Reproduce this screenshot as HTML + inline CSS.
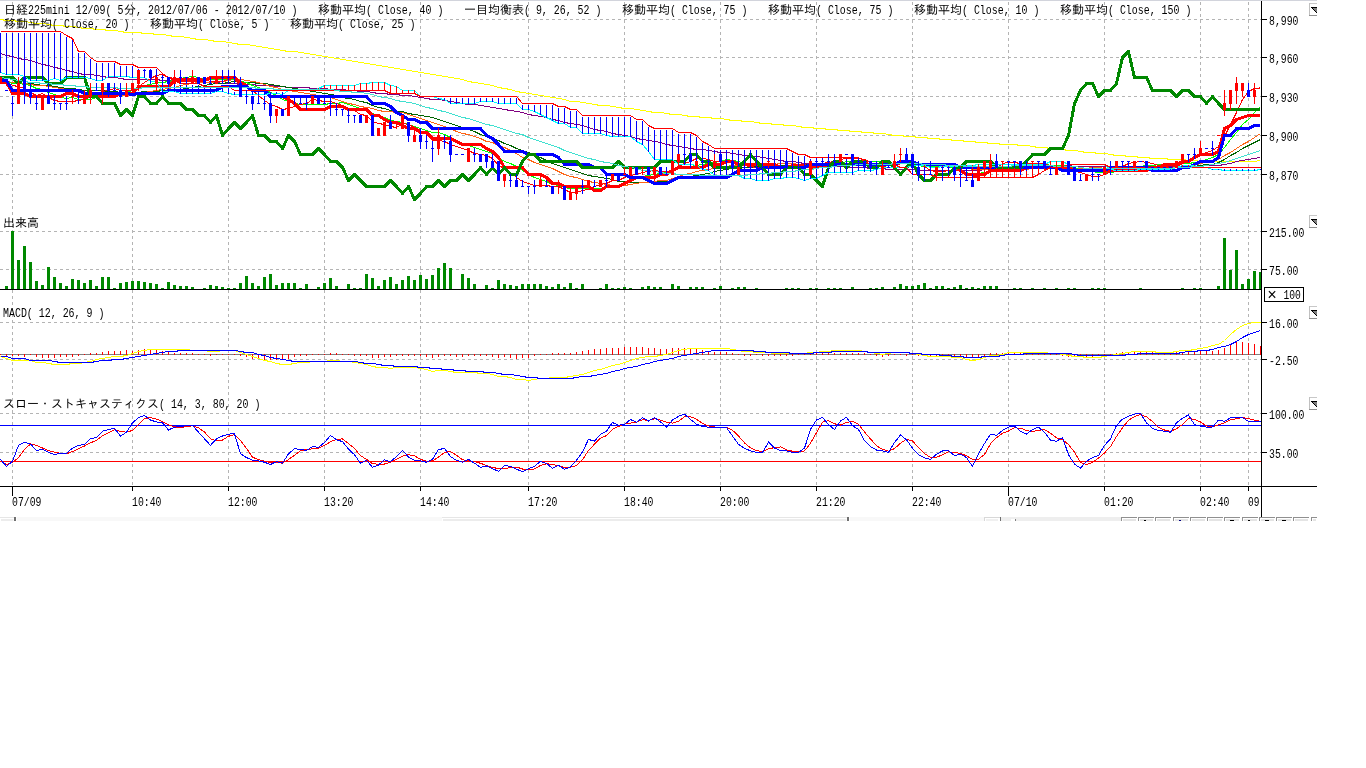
<!DOCTYPE html><html><head><meta charset="utf-8"><title>chart</title><style>
html,body{margin:0;padding:0;background:#fff;overflow:hidden}svg{display:block;will-change:transform}
text{font-family:"Liberation Mono", "IPAGothic", monospace;font-size:12px;fill:#000;white-space:pre}
</style></head><body>
<svg width="1366" height="768" viewBox="0 0 1366 768" shape-rendering="crispEdges">
<rect x="0" y="0" width="1366" height="768" fill="#fff" />
<rect x="0" y="0" width="1317" height="1" fill="#d2d4dc" />
<g stroke="#b4b4b4" stroke-width="1" stroke-dasharray="3 3">
<line x1="12.5" y1="2" x2="12.5" y2="486"/>
<line x1="132.5" y1="2" x2="132.5" y2="486"/>
<line x1="228.5" y1="2" x2="228.5" y2="486"/>
<line x1="324.5" y1="2" x2="324.5" y2="486"/>
<line x1="420.5" y1="2" x2="420.5" y2="486"/>
<line x1="528.5" y1="2" x2="528.5" y2="486"/>
<line x1="624.5" y1="2" x2="624.5" y2="486"/>
<line x1="720.5" y1="2" x2="720.5" y2="486"/>
<line x1="816.5" y1="2" x2="816.5" y2="486"/>
<line x1="912.5" y1="2" x2="912.5" y2="486"/>
<line x1="1008.5" y1="2" x2="1008.5" y2="486"/>
<line x1="1104.5" y1="2" x2="1104.5" y2="486"/>
<line x1="1200.5" y1="2" x2="1200.5" y2="486"/>
<line x1="1248.5" y1="2" x2="1248.5" y2="486"/>
<line x1="0" y1="19.5" x2="1261" y2="19.5"/>
<line x1="0" y1="57.5" x2="1261" y2="57.5"/>
<line x1="0" y1="96.5" x2="1261" y2="96.5"/>
<line x1="0" y1="135.5" x2="1261" y2="135.5"/>
<line x1="0" y1="174.5" x2="1261" y2="174.5"/>
<line x1="0" y1="231.5" x2="1261" y2="231.5"/>
<line x1="0" y1="269.5" x2="1261" y2="269.5"/>
<line x1="0" y1="322.5" x2="1261" y2="322.5"/>
<line x1="0" y1="359.5" x2="1261" y2="359.5"/>
<line x1="0" y1="413.5" x2="1261" y2="413.5"/>
<line x1="0" y1="452.5" x2="1261" y2="452.5"/>
</g>
<g fill="#008800">
<rect x="5" y="286" width="3" height="3"/>
<rect x="11" y="231" width="3" height="58"/>
<rect x="17" y="260" width="3" height="29"/>
<rect x="23" y="246" width="3" height="43"/>
<rect x="29" y="262" width="3" height="27"/>
<rect x="35" y="281" width="3" height="8"/>
<rect x="41" y="285" width="3" height="4"/>
<rect x="47" y="267" width="3" height="22"/>
<rect x="53" y="277" width="3" height="12"/>
<rect x="59" y="283" width="3" height="6"/>
<rect x="65" y="286" width="3" height="3"/>
<rect x="71" y="279" width="3" height="10"/>
<rect x="77" y="280" width="3" height="9"/>
<rect x="83" y="283" width="3" height="6"/>
<rect x="89" y="280" width="3" height="9"/>
<rect x="95" y="286" width="3" height="3"/>
<rect x="101" y="277" width="3" height="12"/>
<rect x="107" y="277" width="3" height="12"/>
<rect x="113" y="288" width="3" height="1"/>
<rect x="119" y="283" width="3" height="6"/>
<rect x="125" y="282" width="3" height="7"/>
<rect x="131" y="281" width="3" height="8"/>
<rect x="137" y="281" width="3" height="8"/>
<rect x="143" y="282" width="3" height="7"/>
<rect x="149" y="283" width="3" height="6"/>
<rect x="155" y="284" width="3" height="5"/>
<rect x="161" y="288" width="3" height="1"/>
<rect x="167" y="282" width="3" height="7"/>
<rect x="173" y="285" width="3" height="4"/>
<rect x="179" y="286" width="3" height="3"/>
<rect x="185" y="286" width="3" height="3"/>
<rect x="191" y="287" width="3" height="2"/>
<rect x="203" y="288" width="3" height="1"/>
<rect x="209" y="285" width="3" height="4"/>
<rect x="215" y="286" width="3" height="3"/>
<rect x="221" y="287" width="3" height="2"/>
<rect x="227" y="288" width="3" height="1"/>
<rect x="233" y="288" width="3" height="1"/>
<rect x="239" y="283" width="3" height="6"/>
<rect x="245" y="276" width="3" height="13"/>
<rect x="251" y="283" width="3" height="6"/>
<rect x="257" y="286" width="3" height="3"/>
<rect x="263" y="277" width="3" height="12"/>
<rect x="269" y="274" width="3" height="15"/>
<rect x="275" y="285" width="3" height="4"/>
<rect x="281" y="283" width="3" height="6"/>
<rect x="287" y="283" width="3" height="6"/>
<rect x="293" y="283" width="3" height="6"/>
<rect x="299" y="288" width="3" height="1"/>
<rect x="305" y="284" width="3" height="5"/>
<rect x="317" y="287" width="3" height="2"/>
<rect x="323" y="283" width="3" height="6"/>
<rect x="329" y="278" width="3" height="11"/>
<rect x="335" y="286" width="3" height="3"/>
<rect x="347" y="284" width="3" height="5"/>
<rect x="353" y="288" width="3" height="1"/>
<rect x="359" y="288" width="3" height="1"/>
<rect x="365" y="274" width="3" height="15"/>
<rect x="371" y="278" width="3" height="11"/>
<rect x="377" y="286" width="3" height="3"/>
<rect x="383" y="280" width="3" height="9"/>
<rect x="389" y="277" width="3" height="12"/>
<rect x="395" y="284" width="3" height="5"/>
<rect x="401" y="280" width="3" height="9"/>
<rect x="407" y="276" width="3" height="13"/>
<rect x="413" y="280" width="3" height="9"/>
<rect x="419" y="275" width="3" height="14"/>
<rect x="425" y="279" width="3" height="10"/>
<rect x="431" y="275" width="3" height="14"/>
<rect x="437" y="268" width="3" height="21"/>
<rect x="443" y="263" width="3" height="26"/>
<rect x="449" y="268" width="3" height="21"/>
<rect x="461" y="274" width="3" height="15"/>
<rect x="467" y="278" width="3" height="11"/>
<rect x="473" y="284" width="3" height="5"/>
<rect x="485" y="285" width="3" height="4"/>
<rect x="491" y="288" width="3" height="1"/>
<rect x="497" y="280" width="3" height="9"/>
<rect x="503" y="284" width="3" height="5"/>
<rect x="509" y="285" width="3" height="4"/>
<rect x="515" y="286" width="3" height="3"/>
<rect x="521" y="284" width="3" height="5"/>
<rect x="527" y="284" width="3" height="5"/>
<rect x="533" y="284" width="3" height="5"/>
<rect x="539" y="284" width="3" height="5"/>
<rect x="545" y="286" width="3" height="3"/>
<rect x="551" y="287" width="3" height="2"/>
<rect x="557" y="284" width="3" height="5"/>
<rect x="563" y="287" width="3" height="2"/>
<rect x="569" y="283" width="3" height="6"/>
<rect x="575" y="288" width="3" height="1"/>
<rect x="581" y="284" width="3" height="5"/>
<rect x="599" y="288" width="3" height="1"/>
<rect x="605" y="284" width="3" height="5"/>
<rect x="611" y="288" width="3" height="1"/>
<rect x="617" y="288" width="3" height="1"/>
<rect x="623" y="287" width="3" height="2"/>
<rect x="629" y="288" width="3" height="1"/>
<rect x="641" y="287" width="3" height="2"/>
<rect x="647" y="286" width="3" height="3"/>
<rect x="653" y="287" width="3" height="2"/>
<rect x="659" y="287" width="3" height="2"/>
<rect x="671" y="284" width="3" height="5"/>
<rect x="677" y="286" width="3" height="3"/>
<rect x="689" y="287" width="3" height="2"/>
<rect x="695" y="287" width="3" height="2"/>
<rect x="701" y="287" width="3" height="2"/>
<rect x="713" y="288" width="3" height="1"/>
<rect x="719" y="286" width="3" height="3"/>
<rect x="731" y="288" width="3" height="1"/>
<rect x="737" y="287" width="3" height="2"/>
<rect x="743" y="287" width="3" height="2"/>
<rect x="755" y="288" width="3" height="1"/>
<rect x="785" y="288" width="3" height="1"/>
<rect x="791" y="288" width="3" height="1"/>
<rect x="797" y="288" width="3" height="1"/>
<rect x="809" y="288" width="3" height="1"/>
<rect x="815" y="288" width="3" height="1"/>
<rect x="827" y="288" width="3" height="1"/>
<rect x="833" y="288" width="3" height="1"/>
<rect x="839" y="288" width="3" height="1"/>
<rect x="851" y="287" width="3" height="2"/>
<rect x="869" y="288" width="3" height="1"/>
<rect x="875" y="288" width="3" height="1"/>
<rect x="881" y="287" width="3" height="2"/>
<rect x="893" y="287" width="3" height="2"/>
<rect x="899" y="284" width="3" height="5"/>
<rect x="905" y="286" width="3" height="3"/>
<rect x="911" y="286" width="3" height="3"/>
<rect x="917" y="285" width="3" height="4"/>
<rect x="923" y="283" width="3" height="6"/>
<rect x="929" y="288" width="3" height="1"/>
<rect x="935" y="286" width="3" height="3"/>
<rect x="941" y="286" width="3" height="3"/>
<rect x="947" y="288" width="3" height="1"/>
<rect x="953" y="287" width="3" height="2"/>
<rect x="959" y="285" width="3" height="4"/>
<rect x="965" y="288" width="3" height="1"/>
<rect x="971" y="287" width="3" height="2"/>
<rect x="977" y="288" width="3" height="1"/>
<rect x="983" y="286" width="3" height="3"/>
<rect x="989" y="286" width="3" height="3"/>
<rect x="995" y="286" width="3" height="3"/>
<rect x="1013" y="288" width="3" height="1"/>
<rect x="1019" y="288" width="3" height="1"/>
<rect x="1031" y="288" width="3" height="1"/>
<rect x="1043" y="288" width="3" height="1"/>
<rect x="1055" y="288" width="3" height="1"/>
<rect x="1067" y="288" width="3" height="1"/>
<rect x="1073" y="288" width="3" height="1"/>
<rect x="1091" y="288" width="3" height="1"/>
<rect x="1097" y="288" width="3" height="1"/>
<rect x="1103" y="288" width="3" height="1"/>
<rect x="1139" y="288" width="3" height="1"/>
<rect x="1181" y="288" width="3" height="1"/>
<rect x="1193" y="288" width="3" height="1"/>
<rect x="1199" y="288" width="3" height="1"/>
<rect x="1217" y="286" width="3" height="3"/>
<rect x="1223" y="238" width="3" height="51"/>
<rect x="1229" y="270" width="3" height="19"/>
<rect x="1235" y="250" width="3" height="39"/>
<rect x="1241" y="284" width="3" height="5"/>
<rect x="1247" y="279" width="3" height="10"/>
<rect x="1253" y="271" width="3" height="18"/>
<rect x="1259" y="272" width="2" height="17"/>
</g>
<rect x="0" y="289" width="1261" height="1" fill="#000" />
<rect x="0" y="354" width="1261" height="1" fill="#808080" />
<g fill="#ff0000">
<rect x="0" y="354" width="1" height="1"/>
<rect x="6" y="354" width="1" height="3"/>
<rect x="12" y="354" width="1" height="2"/>
<rect x="18" y="354" width="1" height="2"/>
<rect x="24" y="354" width="1" height="3"/>
<rect x="30" y="354" width="1" height="1"/>
<rect x="36" y="354" width="1" height="3"/>
<rect x="42" y="354" width="1" height="4"/>
<rect x="48" y="354" width="1" height="4"/>
<rect x="54" y="354" width="1" height="4"/>
<rect x="60" y="354" width="1" height="3"/>
<rect x="66" y="354" width="1" height="3"/>
<rect x="72" y="354" width="1" height="3"/>
<rect x="78" y="354" width="1" height="2"/>
<rect x="84" y="354" width="1" height="1"/>
<rect x="90" y="353" width="1" height="2"/>
<rect x="96" y="353" width="1" height="2"/>
<rect x="102" y="352" width="1" height="3"/>
<rect x="108" y="351" width="1" height="4"/>
<rect x="114" y="351" width="1" height="4"/>
<rect x="120" y="351" width="1" height="4"/>
<rect x="126" y="350" width="1" height="5"/>
<rect x="132" y="351" width="1" height="4"/>
<rect x="138" y="350" width="1" height="5"/>
<rect x="144" y="349" width="1" height="6"/>
<rect x="150" y="349" width="1" height="6"/>
<rect x="156" y="350" width="1" height="5"/>
<rect x="162" y="351" width="1" height="4"/>
<rect x="168" y="352" width="1" height="3"/>
<rect x="174" y="353" width="1" height="2"/>
<rect x="180" y="353" width="1" height="2"/>
<rect x="186" y="353" width="1" height="2"/>
<rect x="192" y="353" width="1" height="2"/>
<rect x="198" y="354" width="1" height="1"/>
<rect x="204" y="354" width="1" height="1"/>
<rect x="210" y="354" width="1" height="2"/>
<rect x="216" y="354" width="1" height="1"/>
<rect x="222" y="354" width="1" height="1"/>
<rect x="228" y="354" width="1" height="1"/>
<rect x="234" y="354" width="1" height="1"/>
<rect x="240" y="354" width="1" height="2"/>
<rect x="246" y="354" width="1" height="3"/>
<rect x="252" y="354" width="1" height="5"/>
<rect x="258" y="354" width="1" height="5"/>
<rect x="264" y="354" width="1" height="6"/>
<rect x="270" y="354" width="1" height="6"/>
<rect x="276" y="354" width="1" height="6"/>
<rect x="282" y="354" width="1" height="6"/>
<rect x="288" y="354" width="1" height="5"/>
<rect x="294" y="354" width="1" height="3"/>
<rect x="300" y="354" width="1" height="2"/>
<rect x="306" y="354" width="1" height="2"/>
<rect x="312" y="354" width="1" height="1"/>
<rect x="318" y="354" width="1" height="1"/>
<rect x="324" y="354" width="1" height="1"/>
<rect x="330" y="353" width="1" height="2"/>
<rect x="336" y="353" width="1" height="2"/>
<rect x="342" y="354" width="1" height="1"/>
<rect x="348" y="354" width="1" height="1"/>
<rect x="354" y="354" width="1" height="2"/>
<rect x="360" y="354" width="1" height="2"/>
<rect x="366" y="354" width="1" height="2"/>
<rect x="372" y="354" width="1" height="4"/>
<rect x="378" y="354" width="1" height="4"/>
<rect x="384" y="354" width="1" height="3"/>
<rect x="390" y="354" width="1" height="3"/>
<rect x="396" y="354" width="1" height="2"/>
<rect x="402" y="354" width="1" height="2"/>
<rect x="408" y="354" width="1" height="2"/>
<rect x="414" y="354" width="1" height="2"/>
<rect x="420" y="354" width="1" height="2"/>
<rect x="426" y="354" width="1" height="3"/>
<rect x="432" y="354" width="1" height="4"/>
<rect x="438" y="354" width="1" height="3"/>
<rect x="444" y="354" width="1" height="2"/>
<rect x="450" y="354" width="1" height="2"/>
<rect x="456" y="354" width="1" height="3"/>
<rect x="462" y="354" width="1" height="3"/>
<rect x="468" y="354" width="1" height="2"/>
<rect x="474" y="354" width="1" height="2"/>
<rect x="480" y="354" width="1" height="2"/>
<rect x="486" y="354" width="1" height="2"/>
<rect x="492" y="354" width="1" height="3"/>
<rect x="498" y="354" width="1" height="4"/>
<rect x="504" y="354" width="1" height="3"/>
<rect x="510" y="354" width="1" height="4"/>
<rect x="516" y="354" width="1" height="5"/>
<rect x="522" y="354" width="1" height="4"/>
<rect x="528" y="354" width="1" height="4"/>
<rect x="534" y="354" width="1" height="2"/>
<rect x="540" y="354" width="1" height="1"/>
<rect x="546" y="354" width="1" height="1"/>
<rect x="552" y="353" width="1" height="2"/>
<rect x="558" y="353" width="1" height="2"/>
<rect x="564" y="353" width="1" height="2"/>
<rect x="570" y="353" width="1" height="2"/>
<rect x="576" y="352" width="1" height="3"/>
<rect x="582" y="351" width="1" height="4"/>
<rect x="588" y="350" width="1" height="5"/>
<rect x="594" y="349" width="1" height="6"/>
<rect x="600" y="349" width="1" height="6"/>
<rect x="606" y="348" width="1" height="7"/>
<rect x="612" y="348" width="1" height="7"/>
<rect x="618" y="348" width="1" height="7"/>
<rect x="624" y="347" width="1" height="8"/>
<rect x="630" y="347" width="1" height="8"/>
<rect x="636" y="347" width="1" height="8"/>
<rect x="642" y="347" width="1" height="8"/>
<rect x="648" y="348" width="1" height="7"/>
<rect x="654" y="348" width="1" height="7"/>
<rect x="660" y="349" width="1" height="6"/>
<rect x="666" y="349" width="1" height="6"/>
<rect x="672" y="348" width="1" height="7"/>
<rect x="678" y="348" width="1" height="7"/>
<rect x="684" y="348" width="1" height="7"/>
<rect x="690" y="349" width="1" height="6"/>
<rect x="696" y="349" width="1" height="6"/>
<rect x="702" y="350" width="1" height="5"/>
<rect x="708" y="351" width="1" height="4"/>
<rect x="714" y="352" width="1" height="3"/>
<rect x="720" y="352" width="1" height="3"/>
<rect x="726" y="352" width="1" height="3"/>
<rect x="732" y="353" width="1" height="2"/>
<rect x="738" y="354" width="1" height="1"/>
<rect x="744" y="354" width="1" height="2"/>
<rect x="750" y="354" width="1" height="2"/>
<rect x="756" y="354" width="1" height="1"/>
<rect x="762" y="354" width="1" height="2"/>
<rect x="768" y="354" width="1" height="2"/>
<rect x="774" y="354" width="1" height="2"/>
<rect x="780" y="354" width="1" height="2"/>
<rect x="786" y="354" width="1" height="2"/>
<rect x="792" y="354" width="1" height="2"/>
<rect x="798" y="354" width="1" height="1"/>
<rect x="804" y="354" width="1" height="1"/>
<rect x="810" y="354" width="1" height="1"/>
<rect x="816" y="353" width="1" height="2"/>
<rect x="822" y="353" width="1" height="2"/>
<rect x="828" y="353" width="1" height="2"/>
<rect x="834" y="353" width="1" height="2"/>
<rect x="840" y="353" width="1" height="2"/>
<rect x="846" y="353" width="1" height="2"/>
<rect x="852" y="353" width="1" height="2"/>
<rect x="858" y="353" width="1" height="2"/>
<rect x="864" y="353" width="1" height="2"/>
<rect x="870" y="354" width="1" height="1"/>
<rect x="876" y="354" width="1" height="2"/>
<rect x="882" y="354" width="1" height="3"/>
<rect x="888" y="354" width="1" height="2"/>
<rect x="894" y="354" width="1" height="1"/>
<rect x="900" y="354" width="1" height="1"/>
<rect x="906" y="354" width="1" height="2"/>
<rect x="912" y="354" width="1" height="1"/>
<rect x="918" y="354" width="1" height="2"/>
<rect x="924" y="354" width="1" height="2"/>
<rect x="930" y="354" width="1" height="3"/>
<rect x="936" y="354" width="1" height="2"/>
<rect x="942" y="354" width="1" height="2"/>
<rect x="948" y="354" width="1" height="2"/>
<rect x="954" y="354" width="1" height="2"/>
<rect x="960" y="354" width="1" height="2"/>
<rect x="966" y="354" width="1" height="3"/>
<rect x="972" y="354" width="1" height="4"/>
<rect x="978" y="354" width="1" height="3"/>
<rect x="984" y="354" width="1" height="2"/>
<rect x="990" y="353" width="1" height="2"/>
<rect x="996" y="353" width="1" height="2"/>
<rect x="1002" y="353" width="1" height="2"/>
<rect x="1008" y="352" width="1" height="3"/>
<rect x="1014" y="352" width="1" height="3"/>
<rect x="1020" y="353" width="1" height="2"/>
<rect x="1026" y="353" width="1" height="2"/>
<rect x="1032" y="353" width="1" height="2"/>
<rect x="1038" y="353" width="1" height="2"/>
<rect x="1044" y="353" width="1" height="2"/>
<rect x="1050" y="354" width="1" height="1"/>
<rect x="1056" y="354" width="1" height="1"/>
<rect x="1062" y="354" width="1" height="2"/>
<rect x="1068" y="354" width="1" height="3"/>
<rect x="1074" y="354" width="1" height="2"/>
<rect x="1080" y="354" width="1" height="3"/>
<rect x="1086" y="354" width="1" height="3"/>
<rect x="1092" y="354" width="1" height="3"/>
<rect x="1098" y="354" width="1" height="2"/>
<rect x="1104" y="354" width="1" height="1"/>
<rect x="1110" y="354" width="1" height="1"/>
<rect x="1116" y="353" width="1" height="2"/>
<rect x="1122" y="352" width="1" height="3"/>
<rect x="1128" y="352" width="1" height="3"/>
<rect x="1134" y="352" width="1" height="3"/>
<rect x="1140" y="351" width="1" height="4"/>
<rect x="1146" y="352" width="1" height="3"/>
<rect x="1152" y="352" width="1" height="3"/>
<rect x="1158" y="352" width="1" height="3"/>
<rect x="1164" y="353" width="1" height="2"/>
<rect x="1170" y="353" width="1" height="2"/>
<rect x="1176" y="352" width="1" height="3"/>
<rect x="1182" y="352" width="1" height="3"/>
<rect x="1188" y="352" width="1" height="3"/>
<rect x="1194" y="352" width="1" height="3"/>
<rect x="1200" y="351" width="1" height="4"/>
<rect x="1206" y="351" width="1" height="4"/>
<rect x="1212" y="351" width="1" height="4"/>
<rect x="1218" y="350" width="1" height="5"/>
<rect x="1224" y="348" width="1" height="7"/>
<rect x="1230" y="344" width="1" height="11"/>
<rect x="1236" y="342" width="1" height="13"/>
<rect x="1242" y="342" width="1" height="13"/>
<rect x="1248" y="343" width="1" height="12"/>
<rect x="1254" y="344" width="1" height="11"/>
<rect x="1260" y="346" width="1" height="9"/>
</g>
<polyline points="0.50,356.50 6.50,358.50 12.50,360.50 18.50,360.50 24.50,360.50 30.50,360.50 36.50,362.50 42.50,362.50 48.50,363.50 54.50,364.50 60.50,364.50 66.50,364.50 72.50,363.50 78.50,363.50 84.50,362.50 90.50,361.50 96.50,359.50 102.50,358.50 108.50,357.50 114.50,356.50 120.50,356.50 126.50,355.50 132.50,353.50 138.50,351.50 144.50,350.50 150.50,349.50 156.50,349.50 162.50,349.50 168.50,349.50 174.50,349.50 180.50,349.50 186.50,349.50 192.50,350.50 198.50,350.50 204.50,350.50 210.50,351.50 216.50,351.50 222.50,350.50 228.50,350.50 234.50,350.50 240.50,352.50 246.50,354.50 252.50,356.50 258.50,358.50 264.50,360.50 270.50,361.50 276.50,363.50 282.50,364.50 288.50,364.50 294.50,363.50 300.50,362.50 306.50,362.50 312.50,361.50 318.50,361.50 324.50,361.50 330.50,360.50 336.50,360.50 342.50,361.50 348.50,361.50 354.50,362.50 360.50,363.50 366.50,364.50 372.50,366.50 378.50,367.50 384.50,367.50 390.50,368.50 396.50,367.50 402.50,367.50 408.50,367.50 414.50,367.50 420.50,368.50 426.50,369.50 432.50,371.50 438.50,370.50 444.50,370.50 450.50,371.50 456.50,372.50 462.50,372.50 468.50,372.50 474.50,372.50 480.50,373.50 486.50,373.50 492.50,374.50 498.50,376.50 504.50,376.50 510.50,377.50 516.50,379.50 522.50,379.50 528.50,380.50 534.50,379.50 540.50,378.50 546.50,378.50 552.50,377.50 558.50,377.50 564.50,377.50 570.50,376.50 576.50,375.50 582.50,374.50 588.50,372.50 594.50,370.50 600.50,369.50 606.50,367.50 612.50,365.50 618.50,364.50 624.50,362.50 630.50,360.50 636.50,358.50 642.50,357.50 648.50,356.50 654.50,356.50 660.50,355.50 666.50,354.50 672.50,352.50 678.50,350.50 684.50,349.50 690.50,348.50 696.50,348.50 702.50,348.50 708.50,348.50 714.50,348.50 720.50,348.50 726.50,348.50 732.50,349.50 738.50,350.50 744.50,351.50 750.50,351.50 756.50,352.50 762.50,352.50 768.50,352.50 774.50,353.50 780.50,353.50 786.50,353.50 792.50,353.50 798.50,353.50 804.50,353.50 810.50,352.50 816.50,352.50 822.50,351.50 828.50,351.50 834.50,350.50 840.50,350.50 846.50,350.50 852.50,350.50 858.50,350.50 864.50,351.50 870.50,352.50 876.50,353.50 882.50,354.50 888.50,353.50 894.50,352.50 900.50,352.50 906.50,352.50 912.50,353.50 918.50,354.50 924.50,355.50 930.50,356.50 936.50,356.50 942.50,356.50 948.50,356.50 954.50,357.50 960.50,357.50 966.50,359.50 972.50,360.50 978.50,359.50 984.50,357.50 990.50,355.50 996.50,355.50 1002.50,354.50 1008.50,352.50 1014.50,352.50 1020.50,352.50 1026.50,352.50 1032.50,352.50 1038.50,352.50 1044.50,352.50 1050.50,353.50 1056.50,353.50 1062.50,354.50 1068.50,355.50 1074.50,356.50 1080.50,356.50 1086.50,357.50 1092.50,357.50 1098.50,357.50 1104.50,356.50 1110.50,355.50 1116.50,354.50 1122.50,353.50 1128.50,352.50 1134.50,351.50 1140.50,351.50 1146.50,351.50 1152.50,351.50 1158.50,352.50 1164.50,352.50 1170.50,352.50 1176.50,351.50 1182.50,350.50 1188.50,350.50 1194.50,349.50 1200.50,348.50 1206.50,347.50 1212.50,345.50 1218.50,344.50 1224.50,340.50 1230.50,334.50 1236.50,329.50 1242.50,325.50 1248.50,323.50 1254.50,322.50 1260.50,322.50" fill="none" stroke="#ffff00" stroke-width="1" />
<polyline points="0.50,356.50 6.50,356.50 12.50,358.50 18.50,358.50 24.50,358.50 30.50,360.50 36.50,360.50 42.50,360.50 48.50,360.50 54.50,361.50 60.50,362.50 66.50,362.50 72.50,362.50 78.50,362.50 84.50,362.50 90.50,362.50 96.50,361.50 102.50,360.50 108.50,360.50 114.50,359.50 120.50,359.50 126.50,358.50 132.50,357.50 138.50,356.50 144.50,355.50 150.50,354.50 156.50,353.50 162.50,352.50 168.50,351.50 174.50,351.50 180.50,350.50 186.50,350.50 192.50,350.50 198.50,350.50 204.50,350.50 210.50,350.50 216.50,350.50 222.50,350.50 228.50,350.50 234.50,350.50 240.50,351.50 246.50,352.50 252.50,352.50 258.50,354.50 264.50,355.50 270.50,357.50 276.50,358.50 282.50,359.50 288.50,360.50 294.50,361.50 300.50,361.50 306.50,361.50 312.50,361.50 318.50,361.50 324.50,361.50 330.50,361.50 336.50,361.50 342.50,361.50 348.50,361.50 354.50,361.50 360.50,362.50 366.50,363.50 372.50,363.50 378.50,364.50 384.50,365.50 390.50,365.50 396.50,366.50 402.50,366.50 408.50,366.50 414.50,366.50 420.50,367.50 426.50,367.50 432.50,368.50 438.50,368.50 444.50,369.50 450.50,369.50 456.50,370.50 462.50,370.50 468.50,371.50 474.50,371.50 480.50,371.50 486.50,372.50 492.50,372.50 498.50,373.50 504.50,374.50 510.50,374.50 516.50,375.50 522.50,376.50 528.50,377.50 534.50,377.50 540.50,378.50 546.50,378.50 552.50,378.50 558.50,378.50 564.50,378.50 570.50,378.50 576.50,377.50 582.50,376.50 588.50,376.50 594.50,375.50 600.50,374.50 606.50,373.50 612.50,371.50 618.50,370.50 624.50,368.50 630.50,367.50 636.50,366.50 642.50,364.50 648.50,363.50 654.50,361.50 660.50,360.50 666.50,359.50 672.50,358.50 678.50,356.50 684.50,355.50 690.50,354.50 696.50,353.50 702.50,352.50 708.50,351.50 714.50,350.50 720.50,350.50 726.50,350.50 732.50,350.50 738.50,350.50 744.50,350.50 750.50,350.50 756.50,351.50 762.50,351.50 768.50,352.50 774.50,352.50 780.50,352.50 786.50,352.50 792.50,353.50 798.50,353.50 804.50,353.50 810.50,353.50 816.50,352.50 822.50,352.50 828.50,352.50 834.50,351.50 840.50,351.50 846.50,351.50 852.50,351.50 858.50,351.50 864.50,351.50 870.50,352.50 876.50,352.50 882.50,352.50 888.50,352.50 894.50,352.50 900.50,352.50 906.50,352.50 912.50,353.50 918.50,353.50 924.50,354.50 930.50,354.50 936.50,354.50 942.50,355.50 948.50,355.50 954.50,356.50 960.50,356.50 966.50,357.50 972.50,357.50 978.50,357.50 984.50,356.50 990.50,356.50 996.50,356.50 1002.50,355.50 1008.50,354.50 1014.50,354.50 1020.50,354.50 1026.50,353.50 1032.50,353.50 1038.50,353.50 1044.50,353.50 1050.50,353.50 1056.50,353.50 1062.50,353.50 1068.50,353.50 1074.50,354.50 1080.50,355.50 1086.50,355.50 1092.50,355.50 1098.50,355.50 1104.50,355.50 1110.50,355.50 1116.50,355.50 1122.50,355.50 1128.50,354.50 1134.50,354.50 1140.50,353.50 1146.50,353.50 1152.50,353.50 1158.50,353.50 1164.50,353.50 1170.50,353.50 1176.50,353.50 1182.50,352.50 1188.50,351.50 1194.50,351.50 1200.50,350.50 1206.50,350.50 1212.50,349.50 1218.50,347.50 1224.50,346.50 1230.50,344.50 1236.50,341.50 1242.50,337.50 1248.50,334.50 1254.50,332.50 1260.50,330.50" fill="none" stroke="#0000ff" stroke-width="1" />
<rect x="0" y="425" width="1261" height="1" fill="#0000ff" />
<rect x="0" y="461" width="1261" height="1" fill="#ff0000" />
<polyline points="0.50,461.29 6.50,464.47 12.50,462.35 18.50,457.66 24.50,449.60 30.50,443.86 36.50,445.54 42.50,447.98 48.50,450.73 54.50,452.16 60.50,453.41 66.50,453.73 72.50,451.54 78.50,448.92 84.50,445.98 90.50,442.86 96.50,440.17 102.50,435.80 108.50,432.67 114.50,429.74 120.50,431.30 126.50,432.24 132.50,430.36 138.50,424.24 144.50,418.62 150.50,417.68 156.50,419.12 162.50,421.62 168.50,424.93 174.50,426.68 180.50,427.93 186.50,426.49 192.50,425.87 198.50,427.74 204.50,432.11 210.50,438.80 216.50,440.98 222.50,440.05 228.50,436.30 234.50,434.61 240.50,440.55 246.50,448.35 252.50,457.22 258.50,459.60 264.50,461.16 270.50,462.53 276.50,462.78 282.50,463.10 288.50,459.54 294.50,455.23 300.50,450.67 306.50,449.54 312.50,448.85 318.50,448.10 324.50,445.48 330.50,441.73 336.50,439.23 342.50,438.92 348.50,443.48 354.50,448.48 360.50,455.66 366.50,459.41 372.50,463.60 378.50,464.22 384.50,464.03 390.50,462.16 396.50,459.35 402.50,456.23 408.50,454.66 414.50,455.91 420.50,459.41 426.50,461.16 432.50,460.85 438.50,457.04 444.50,452.48 450.50,451.54 456.50,455.16 462.50,459.72 468.50,460.66 474.50,461.60 480.50,463.28 486.50,465.47 492.50,467.35 498.50,468.66 504.50,468.53 510.50,467.72 516.50,467.03 522.50,469.03 528.50,469.84 534.50,468.91 540.50,465.47 546.50,463.72 552.50,464.35 558.50,465.72 564.50,467.66 570.50,467.22 576.50,465.53 582.50,459.72 588.50,450.54 594.50,444.17 600.50,438.23 606.50,435.55 612.50,429.30 618.50,426.37 624.50,424.05 630.50,423.05 636.50,422.05 642.50,419.81 648.50,420.31 654.50,418.74 660.50,420.18 666.50,422.24 672.50,423.05 678.50,421.18 684.50,416.81 690.50,416.62 696.50,419.24 702.50,423.43 708.50,425.99 714.50,426.99 720.50,427.18 726.50,427.30 732.50,430.24 738.50,435.99 744.50,442.86 750.50,447.85 756.50,450.48 762.50,451.85 768.50,448.92 774.50,447.54 780.50,446.92 786.50,449.85 792.50,451.23 798.50,451.85 804.50,450.92 810.50,443.29 816.50,432.55 822.50,422.24 828.50,420.68 834.50,423.80 840.50,425.05 846.50,422.55 852.50,421.31 858.50,424.12 864.50,431.92 870.50,438.92 876.50,445.79 882.50,449.23 888.50,451.10 894.50,448.60 900.50,443.29 906.50,439.11 912.50,440.98 918.50,447.54 924.50,453.60 930.50,457.35 936.50,457.16 942.50,454.85 948.50,451.85 954.50,452.35 960.50,453.41 966.50,455.79 972.50,459.35 978.50,459.22 984.50,454.54 990.50,443.79 996.50,437.67 1002.50,433.30 1008.50,430.99 1014.50,427.86 1020.50,428.18 1026.50,430.49 1032.50,431.61 1038.50,430.24 1044.50,429.61 1050.50,433.17 1056.50,437.86 1062.50,439.61 1068.50,444.48 1074.50,452.10 1080.50,462.35 1086.50,464.53 1092.50,462.35 1098.50,458.16 1104.50,452.85 1110.50,446.61 1116.50,436.49 1122.50,427.74 1128.50,420.24 1134.50,416.49 1140.50,414.62 1146.50,416.81 1152.50,421.62 1158.50,427.24 1164.50,430.05 1170.50,431.30 1176.50,428.80 1182.50,424.43 1188.50,418.68 1194.50,419.31 1200.50,421.93 1206.50,425.99 1212.50,426.74 1218.50,424.74 1224.50,422.80 1230.50,419.74 1236.50,418.81 1242.50,417.56 1248.50,418.74 1254.50,420.12 1260.50,421.37" fill="none" stroke="#ff0000" stroke-width="1" />
<polyline points="0.50,459.41 6.50,466.35 12.50,461.29 18.50,445.36 24.50,442.17 30.50,444.04 36.50,450.42 42.50,449.48 48.50,452.29 54.50,454.73 60.50,453.23 66.50,453.23 72.50,448.17 78.50,445.36 84.50,444.42 90.50,438.80 96.50,437.30 102.50,431.30 108.50,429.43 114.50,428.49 120.50,435.99 126.50,432.24 132.50,422.87 138.50,417.62 144.50,415.37 150.50,420.06 156.50,421.93 162.50,422.87 168.50,429.99 174.50,427.18 180.50,426.61 186.50,425.68 192.50,425.30 198.50,432.24 204.50,438.80 210.50,445.36 216.50,438.80 222.50,435.99 228.50,434.11 234.50,433.74 240.50,453.79 246.50,457.54 252.50,460.35 258.50,460.91 264.50,462.22 270.50,464.47 276.50,461.66 282.50,463.16 288.50,453.79 294.50,448.73 300.50,449.48 306.50,450.42 312.50,446.67 318.50,447.23 324.50,442.54 330.50,435.42 336.50,439.73 342.50,441.61 348.50,449.10 354.50,454.73 360.50,463.16 366.50,460.35 372.50,467.28 378.50,465.03 384.50,459.79 390.50,461.66 396.50,456.60 402.50,450.42 408.50,456.98 414.50,460.35 420.50,460.91 426.50,462.22 432.50,459.41 438.50,449.48 444.50,448.54 450.50,456.60 456.50,460.35 462.50,462.22 468.50,459.41 474.50,463.16 480.50,467.28 486.50,465.97 492.50,468.78 498.50,471.22 504.50,465.60 510.50,466.35 516.50,469.16 522.50,471.59 528.50,468.78 534.50,466.35 540.50,461.29 546.50,463.53 552.50,468.22 558.50,465.41 564.50,469.34 570.50,466.91 576.50,460.35 582.50,451.92 588.50,439.36 594.50,441.23 600.50,434.11 606.50,431.30 612.50,422.49 618.50,425.30 624.50,424.37 630.50,419.49 636.50,422.30 642.50,417.62 648.50,420.99 654.50,417.62 660.50,421.93 666.50,427.18 672.50,420.06 678.50,416.31 684.50,414.06 690.50,419.49 696.50,424.18 702.50,426.61 708.50,427.18 714.50,427.18 720.50,427.18 726.50,427.55 732.50,435.99 738.50,444.42 744.50,448.17 750.50,450.98 756.50,452.29 762.50,452.29 768.50,442.17 774.50,448.17 780.50,450.42 786.50,450.98 792.50,452.29 798.50,452.29 804.50,448.17 810.50,429.43 816.50,420.06 822.50,417.24 828.50,424.74 834.50,429.43 840.50,420.99 846.50,417.24 852.50,425.68 858.50,429.43 864.50,440.67 870.50,446.67 876.50,450.04 882.50,450.98 888.50,452.29 894.50,442.54 900.50,435.05 906.50,439.73 912.50,448.17 918.50,454.73 924.50,457.91 930.50,459.41 936.50,454.16 942.50,450.98 948.50,450.42 954.50,455.66 960.50,454.16 966.50,457.54 972.50,466.35 978.50,453.79 984.50,443.48 990.50,434.11 996.50,435.42 1002.50,430.36 1008.50,427.18 1014.50,426.05 1020.50,431.30 1026.50,434.11 1032.50,429.43 1038.50,427.18 1044.50,432.24 1050.50,440.11 1056.50,441.23 1062.50,437.48 1068.50,454.73 1074.50,464.10 1080.50,468.22 1086.50,461.29 1092.50,457.54 1098.50,455.66 1104.50,445.36 1110.50,438.80 1116.50,425.30 1122.50,419.12 1128.50,416.31 1134.50,414.06 1140.50,413.50 1146.50,422.87 1152.50,428.49 1158.50,430.36 1164.50,431.30 1170.50,432.24 1176.50,422.87 1182.50,418.18 1188.50,415.00 1194.50,424.74 1200.50,426.05 1206.50,427.18 1212.50,426.99 1218.50,420.06 1224.50,421.37 1230.50,417.81 1236.50,417.24 1242.50,417.62 1248.50,421.37 1254.50,421.37 1260.50,421.37" fill="none" stroke="#0000ff" stroke-width="1" />
<defs><clipPath id="mc"><rect x="0" y="1" width="1260" height="210"/></clipPath><clipPath id="mc2"><rect x="0" y="1" width="1261" height="210"/></clipPath></defs>
<g clip-path="url(#mc)">
<polyline points="0.50,19.50 6.50,20.50 12.50,20.50 18.50,21.50 24.50,21.50 30.50,22.50 36.50,23.50 42.50,23.50 48.50,24.50 54.50,25.50 60.50,25.50 66.50,26.50 72.50,26.50 78.50,27.50 84.50,28.50 90.50,28.50 96.50,29.50 102.50,29.50 108.50,30.50 114.50,30.50 120.50,31.50 126.50,32.50 132.50,32.50 138.50,32.50 144.50,33.50 150.50,33.50 156.50,34.50 162.50,34.50 168.50,35.50 174.50,36.50 180.50,36.50 186.50,37.50 192.50,38.50 198.50,39.50 204.50,39.50 210.50,40.50 216.50,41.50 222.50,41.50 228.50,42.50 234.50,43.50 240.50,44.50 246.50,44.50 252.50,45.50 258.50,46.50 264.50,47.50 270.50,48.50 276.50,49.50 282.50,50.50 288.50,51.50 294.50,51.50 300.50,52.50 306.50,53.50 312.50,54.50 318.50,55.50 324.50,56.50 330.50,57.50 336.50,58.50 342.50,59.50 348.50,60.50 354.50,61.50 360.50,62.50 366.50,63.50 372.50,64.50 378.50,65.50 384.50,66.50 390.50,67.50 396.50,68.50 402.50,69.50 408.50,70.50 414.50,71.50 420.50,72.50 426.50,73.50 432.50,74.50 438.50,75.50 444.50,76.50 450.50,77.50 456.50,78.50 462.50,79.50 468.50,81.50 474.50,82.50 480.50,83.50 486.50,84.50 492.50,85.50 498.50,87.50 504.50,88.50 510.50,89.50 516.50,91.50 522.50,92.50 528.50,93.50 534.50,94.50 540.50,95.50 546.50,96.50 552.50,97.50 558.50,98.50 564.50,99.50 570.50,101.50 576.50,101.50 582.50,102.50 588.50,103.50 594.50,104.50 600.50,105.50 606.50,105.50 612.50,106.50 618.50,107.50 624.50,108.50 630.50,108.50 636.50,109.50 642.50,110.50 648.50,111.50 654.50,112.50 660.50,112.50 666.50,113.50 672.50,114.50 678.50,114.50 684.50,115.50 690.50,116.50 696.50,116.50 702.50,117.50 708.50,117.50 714.50,118.50 720.50,118.50 726.50,119.50 732.50,120.50 738.50,120.50 744.50,121.50 750.50,121.50 756.50,122.50 762.50,123.50 768.50,123.50 774.50,124.50 780.50,124.50 786.50,125.50 792.50,125.50 798.50,126.50 804.50,127.50 810.50,127.50 816.50,128.50 822.50,128.50 828.50,129.50 834.50,129.50 840.50,130.50 846.50,130.50 852.50,131.50 858.50,131.50 864.50,132.50 870.50,132.50 876.50,133.50 882.50,133.50 888.50,134.50 894.50,135.50 900.50,135.50 906.50,136.50 912.50,136.50 918.50,137.50 924.50,137.50 930.50,138.50 936.50,138.50 942.50,139.50 948.50,139.50 954.50,140.50 960.50,140.50 966.50,141.50 972.50,141.50 978.50,142.50 984.50,142.50 990.50,143.50 996.50,143.50 1002.50,144.50 1008.50,144.50 1014.50,144.50 1020.50,145.50 1026.50,145.50 1032.50,146.50 1038.50,147.50 1044.50,147.50 1050.50,148.50 1056.50,148.50 1062.50,149.50 1068.50,150.50 1074.50,150.50 1080.50,151.50 1086.50,152.50 1092.50,152.50 1098.50,153.50 1104.50,153.50 1110.50,154.50 1116.50,155.50 1122.50,155.50 1128.50,156.50 1134.50,156.50 1140.50,157.50 1146.50,157.50 1152.50,158.50 1158.50,158.50 1164.50,158.50 1170.50,159.50 1176.50,159.50 1182.50,159.50 1188.50,160.50 1194.50,160.50 1200.50,161.50 1206.50,161.50 1212.50,161.50 1218.50,161.50 1224.50,161.50 1230.50,161.50 1236.50,161.50 1242.50,161.50 1248.50,161.50 1254.50,161.50 1260.50,160.50" fill="none" stroke="#ffff00" stroke-width="1" />
<polyline points="0.50,53.50 6.50,55.50 12.50,56.50 18.50,58.50 24.50,59.50 30.50,60.50 36.50,62.50 42.50,64.50 48.50,65.50 54.50,67.50 60.50,68.50 66.50,70.50 72.50,71.50 78.50,73.50 84.50,74.50 90.50,74.50 96.50,75.50 102.50,76.50 108.50,77.50 114.50,77.50 120.50,78.50 126.50,79.50 132.50,79.50 138.50,79.50 144.50,79.50 150.50,79.50 156.50,79.50 162.50,80.50 168.50,80.50 174.50,80.50 180.50,81.50 186.50,81.50 192.50,81.50 198.50,81.50 204.50,82.50 210.50,82.50 216.50,82.50 222.50,83.50 228.50,83.50 234.50,83.50 240.50,84.50 246.50,84.50 252.50,84.50 258.50,85.50 264.50,85.50 270.50,85.50 276.50,86.50 282.50,86.50 288.50,87.50 294.50,87.50 300.50,87.50 306.50,87.50 312.50,88.50 318.50,88.50 324.50,88.50 330.50,89.50 336.50,89.50 342.50,89.50 348.50,90.50 354.50,90.50 360.50,91.50 366.50,91.50 372.50,92.50 378.50,93.50 384.50,93.50 390.50,94.50 396.50,94.50 402.50,95.50 408.50,95.50 414.50,96.50 420.50,97.50 426.50,98.50 432.50,99.50 438.50,99.50 444.50,100.50 450.50,101.50 456.50,102.50 462.50,103.50 468.50,104.50 474.50,104.50 480.50,105.50 486.50,106.50 492.50,107.50 498.50,108.50 504.50,109.50 510.50,110.50 516.50,111.50 522.50,112.50 528.50,114.50 534.50,115.50 540.50,116.50 546.50,117.50 552.50,119.50 558.50,120.50 564.50,122.50 570.50,123.50 576.50,124.50 582.50,125.50 588.50,127.50 594.50,129.50 600.50,130.50 606.50,131.50 612.50,133.50 618.50,134.50 624.50,135.50 630.50,136.50 636.50,138.50 642.50,139.50 648.50,140.50 654.50,141.50 660.50,142.50 666.50,144.50 672.50,145.50 678.50,146.50 684.50,147.50 690.50,148.50 696.50,149.50 702.50,149.50 708.50,150.50 714.50,151.50 720.50,152.50 726.50,152.50 732.50,153.50 738.50,154.50 744.50,155.50 750.50,156.50 756.50,156.50 762.50,157.50 768.50,158.50 774.50,159.50 780.50,160.50 786.50,161.50 792.50,161.50 798.50,162.50 804.50,163.50 810.50,163.50 816.50,164.50 822.50,164.50 828.50,165.50 834.50,165.50 840.50,166.50 846.50,166.50 852.50,167.50 858.50,167.50 864.50,167.50 870.50,168.50 876.50,168.50 882.50,168.50 888.50,169.50 894.50,169.50 900.50,169.50 906.50,169.50 912.50,169.50 918.50,170.50 924.50,170.50 930.50,170.50 936.50,170.50 942.50,170.50 948.50,170.50 954.50,170.50 960.50,170.50 966.50,170.50 972.50,170.50 978.50,170.50 984.50,169.50 990.50,169.50 996.50,169.50 1002.50,168.50 1008.50,168.50 1014.50,167.50 1020.50,167.50 1026.50,167.50 1032.50,166.50 1038.50,166.50 1044.50,166.50 1050.50,166.50 1056.50,166.50 1062.50,166.50 1068.50,165.50 1074.50,166.50 1080.50,166.50 1086.50,166.50 1092.50,166.50 1098.50,166.50 1104.50,166.50 1110.50,166.50 1116.50,166.50 1122.50,166.50 1128.50,166.50 1134.50,166.50 1140.50,166.50 1146.50,166.50 1152.50,166.50 1158.50,166.50 1164.50,166.50 1170.50,166.50 1176.50,166.50 1182.50,166.50 1188.50,166.50 1194.50,166.50 1200.50,165.50 1206.50,165.50 1212.50,165.50 1218.50,165.50 1224.50,164.50 1230.50,163.50 1236.50,161.50 1242.50,160.50 1248.50,159.50 1254.50,158.50 1260.50,157.50" fill="none" stroke="#800080" stroke-width="1" />
<polyline points="0.50,81.50 6.50,81.50 12.50,82.50 18.50,82.50 24.50,83.50 30.50,83.50 36.50,84.50 42.50,85.50 48.50,85.50 54.50,86.50 60.50,87.50 66.50,88.50 72.50,88.50 78.50,89.50 84.50,90.50 90.50,90.50 96.50,90.50 102.50,90.50 108.50,91.50 114.50,91.50 120.50,92.50 126.50,92.50 132.50,92.50 138.50,92.50 144.50,91.50 150.50,91.50 156.50,91.50 162.50,90.50 168.50,90.50 174.50,89.50 180.50,89.50 186.50,88.50 192.50,87.50 198.50,86.50 204.50,85.50 210.50,84.50 216.50,83.50 222.50,83.50 228.50,82.50 234.50,81.50 240.50,81.50 246.50,82.50 252.50,82.50 258.50,83.50 264.50,83.50 270.50,84.50 276.50,85.50 282.50,86.50 288.50,87.50 294.50,88.50 300.50,89.50 306.50,90.50 312.50,91.50 318.50,92.50 324.50,93.50 330.50,94.50 336.50,95.50 342.50,97.50 348.50,98.50 354.50,99.50 360.50,101.50 366.50,102.50 372.50,105.50 378.50,107.50 384.50,108.50 390.50,110.50 396.50,111.50 402.50,111.50 408.50,113.50 414.50,114.50 420.50,115.50 426.50,116.50 432.50,117.50 438.50,119.50 444.50,121.50 450.50,123.50 456.50,125.50 462.50,127.50 468.50,129.50 474.50,131.50 480.50,134.50 486.50,136.50 492.50,138.50 498.50,140.50 504.50,143.50 510.50,145.50 516.50,148.50 522.50,150.50 528.50,152.50 534.50,155.50 540.50,157.50 546.50,160.50 552.50,163.50 558.50,165.50 564.50,167.50 570.50,169.50 576.50,171.50 582.50,173.50 588.50,175.50 594.50,176.50 600.50,177.50 606.50,178.50 612.50,179.50 618.50,181.50 624.50,181.50 630.50,182.50 636.50,182.50 642.50,182.50 648.50,182.50 654.50,182.50 660.50,181.50 666.50,181.50 672.50,180.50 678.50,178.50 684.50,177.50 690.50,176.50 696.50,175.50 702.50,174.50 708.50,173.50 714.50,171.50 720.50,170.50 726.50,169.50 732.50,168.50 738.50,168.50 744.50,167.50 750.50,167.50 756.50,166.50 762.50,166.50 768.50,165.50 774.50,165.50 780.50,165.50 786.50,165.50 792.50,165.50 798.50,164.50 804.50,164.50 810.50,164.50 816.50,163.50 822.50,163.50 828.50,163.50 834.50,164.50 840.50,163.50 846.50,163.50 852.50,163.50 858.50,163.50 864.50,163.50 870.50,164.50 876.50,164.50 882.50,164.50 888.50,164.50 894.50,164.50 900.50,163.50 906.50,163.50 912.50,163.50 918.50,163.50 924.50,164.50 930.50,164.50 936.50,164.50 942.50,164.50 948.50,164.50 954.50,164.50 960.50,165.50 966.50,166.50 972.50,167.50 978.50,167.50 984.50,167.50 990.50,167.50 996.50,168.50 1002.50,168.50 1008.50,168.50 1014.50,167.50 1020.50,167.50 1026.50,167.50 1032.50,167.50 1038.50,167.50 1044.50,167.50 1050.50,168.50 1056.50,168.50 1062.50,168.50 1068.50,168.50 1074.50,168.50 1080.50,168.50 1086.50,169.50 1092.50,169.50 1098.50,169.50 1104.50,169.50 1110.50,169.50 1116.50,168.50 1122.50,167.50 1128.50,167.50 1134.50,167.50 1140.50,167.50 1146.50,167.50 1152.50,167.50 1158.50,167.50 1164.50,167.50 1170.50,167.50 1176.50,167.50 1182.50,167.50 1188.50,167.50 1194.50,166.50 1200.50,165.50 1206.50,164.50 1212.50,164.50 1218.50,162.50 1224.50,159.50 1230.50,155.50 1236.50,152.50 1242.50,148.50 1248.50,145.50 1254.50,142.50 1260.50,139.50" fill="none" stroke="#006400" stroke-width="1" />
<polyline points="0.50,81.50 6.50,81.50 12.50,82.50 18.50,82.50 24.50,83.50 30.50,84.50 36.50,85.50 42.50,85.50 48.50,86.50 54.50,87.50 60.50,88.50 66.50,89.50 72.50,90.50 78.50,91.50 84.50,92.50 90.50,92.50 96.50,93.50 102.50,93.50 108.50,93.50 114.50,94.50 120.50,95.50 126.50,95.50 132.50,94.50 138.50,93.50 144.50,92.50 150.50,91.50 156.50,90.50 162.50,89.50 168.50,88.50 174.50,87.50 180.50,85.50 186.50,84.50 192.50,83.50 198.50,82.50 204.50,82.50 210.50,82.50 216.50,81.50 222.50,81.50 228.50,80.50 234.50,79.50 240.50,79.50 246.50,80.50 252.50,81.50 258.50,82.50 264.50,84.50 270.50,86.50 276.50,87.50 282.50,89.50 288.50,90.50 294.50,91.50 300.50,92.50 306.50,93.50 312.50,94.50 318.50,95.50 324.50,96.50 330.50,97.50 336.50,99.50 342.50,101.50 348.50,103.50 354.50,104.50 360.50,106.50 366.50,107.50 372.50,108.50 378.50,110.50 384.50,111.50 390.50,111.50 396.50,112.50 402.50,112.50 408.50,114.50 414.50,116.50 420.50,118.50 426.50,120.50 432.50,122.50 438.50,124.50 444.50,126.50 450.50,128.50 456.50,131.50 462.50,133.50 468.50,134.50 474.50,136.50 480.50,138.50 486.50,141.50 492.50,142.50 498.50,145.50 504.50,147.50 510.50,150.50 516.50,153.50 522.50,157.50 528.50,159.50 534.50,162.50 540.50,164.50 546.50,166.50 552.50,168.50 558.50,171.50 564.50,174.50 570.50,176.50 576.50,177.50 582.50,179.50 588.50,181.50 594.50,182.50 600.50,183.50 606.50,184.50 612.50,185.50 618.50,185.50 624.50,185.50 630.50,184.50 636.50,183.50 642.50,182.50 648.50,182.50 654.50,181.50 660.50,180.50 666.50,180.50 672.50,178.50 678.50,176.50 684.50,174.50 690.50,173.50 696.50,171.50 702.50,170.50 708.50,169.50 714.50,168.50 720.50,167.50 726.50,166.50 732.50,165.50 738.50,165.50 744.50,165.50 750.50,165.50 756.50,164.50 762.50,164.50 768.50,164.50 774.50,164.50 780.50,163.50 786.50,163.50 792.50,163.50 798.50,164.50 804.50,165.50 810.50,165.50 816.50,165.50 822.50,165.50 828.50,165.50 834.50,165.50 840.50,164.50 846.50,164.50 852.50,164.50 858.50,163.50 864.50,163.50 870.50,163.50 876.50,163.50 882.50,163.50 888.50,164.50 894.50,163.50 900.50,163.50 906.50,162.50 912.50,162.50 918.50,163.50 924.50,163.50 930.50,164.50 936.50,164.50 942.50,164.50 948.50,165.50 954.50,165.50 960.50,166.50 966.50,167.50 972.50,169.50 978.50,169.50 984.50,169.50 990.50,168.50 996.50,168.50 1002.50,168.50 1008.50,168.50 1014.50,168.50 1020.50,168.50 1026.50,169.50 1032.50,168.50 1038.50,168.50 1044.50,167.50 1050.50,167.50 1056.50,167.50 1062.50,167.50 1068.50,167.50 1074.50,168.50 1080.50,168.50 1086.50,168.50 1092.50,167.50 1098.50,167.50 1104.50,168.50 1110.50,168.50 1116.50,168.50 1122.50,168.50 1128.50,168.50 1134.50,168.50 1140.50,167.50 1146.50,167.50 1152.50,168.50 1158.50,168.50 1164.50,168.50 1170.50,168.50 1176.50,167.50 1182.50,167.50 1188.50,166.50 1194.50,165.50 1200.50,163.50 1206.50,162.50 1212.50,161.50 1218.50,159.50 1224.50,155.50 1230.50,152.50 1236.50,148.50 1242.50,144.50 1248.50,141.50 1254.50,137.50 1260.50,133.50" fill="none" stroke="#ff6414" stroke-width="1" />
<polyline points="0.50,80.50 6.50,81.50 12.50,83.50 18.50,83.50 24.50,84.50 30.50,85.50 36.50,88.50 42.50,89.50 48.50,92.50 54.50,94.50 60.50,97.50 66.50,98.50 72.50,97.50 78.50,99.50 84.50,99.50 90.50,99.50 96.50,97.50 102.50,96.50 108.50,95.50 114.50,93.50 120.50,93.50 126.50,92.50 132.50,90.50 138.50,88.50 144.50,85.50 150.50,84.50 156.50,82.50 162.50,82.50 168.50,81.50 174.50,80.50 180.50,78.50 186.50,77.50 192.50,76.50 198.50,77.50 204.50,79.50 210.50,79.50 216.50,79.50 222.50,79.50 228.50,79.50 234.50,79.50 240.50,81.50 246.50,82.50 252.50,85.50 258.50,87.50 264.50,89.50 270.50,92.50 276.50,95.50 282.50,99.50 288.50,101.50 294.50,103.50 300.50,104.50 306.50,104.50 312.50,104.50 318.50,104.50 324.50,104.50 330.50,103.50 336.50,103.50 342.50,102.50 348.50,104.50 354.50,106.50 360.50,108.50 366.50,109.50 372.50,113.50 378.50,115.50 384.50,117.50 390.50,120.50 396.50,121.50 402.50,122.50 408.50,124.50 414.50,126.50 420.50,128.50 426.50,130.50 432.50,132.50 438.50,132.50 444.50,134.50 450.50,137.50 456.50,140.50 462.50,144.50 468.50,145.50 474.50,147.50 480.50,149.50 486.50,151.50 492.50,153.50 498.50,157.50 504.50,161.50 510.50,163.50 516.50,166.50 522.50,170.50 528.50,174.50 534.50,177.50 540.50,179.50 546.50,181.50 552.50,184.50 558.50,185.50 564.50,187.50 570.50,188.50 576.50,188.50 582.50,188.50 588.50,188.50 594.50,188.50 600.50,188.50 606.50,187.50 612.50,185.50 618.50,185.50 624.50,182.50 630.50,179.50 636.50,178.50 642.50,176.50 648.50,175.50 654.50,174.50 660.50,173.50 666.50,172.50 672.50,171.50 678.50,168.50 684.50,166.50 690.50,166.50 696.50,165.50 702.50,164.50 708.50,163.50 714.50,162.50 720.50,161.50 726.50,159.50 732.50,160.50 738.50,161.50 744.50,163.50 750.50,163.50 756.50,164.50 762.50,165.50 768.50,165.50 774.50,165.50 780.50,166.50 786.50,166.50 792.50,166.50 798.50,166.50 804.50,166.50 810.50,166.50 816.50,165.50 822.50,165.50 828.50,165.50 834.50,164.50 840.50,163.50 846.50,161.50 852.50,161.50 858.50,160.50 864.50,160.50 870.50,161.50 876.50,161.50 882.50,162.50 888.50,163.50 894.50,163.50 900.50,163.50 906.50,163.50 912.50,164.50 918.50,165.50 924.50,166.50 930.50,166.50 936.50,166.50 942.50,166.50 948.50,166.50 954.50,168.50 960.50,170.50 966.50,172.50 972.50,174.50 978.50,173.50 984.50,172.50 990.50,170.50 996.50,170.50 1002.50,170.50 1008.50,169.50 1014.50,168.50 1020.50,167.50 1026.50,166.50 1032.50,163.50 1038.50,163.50 1044.50,163.50 1050.50,165.50 1056.50,165.50 1062.50,165.50 1068.50,166.50 1074.50,168.50 1080.50,169.50 1086.50,170.50 1092.50,171.50 1098.50,172.50 1104.50,172.50 1110.50,172.50 1116.50,171.50 1122.50,171.50 1128.50,170.50 1134.50,168.50 1140.50,166.50 1146.50,165.50 1152.50,165.50 1158.50,164.50 1164.50,164.50 1170.50,164.50 1176.50,164.50 1182.50,163.50 1188.50,163.50 1194.50,162.50 1200.50,161.50 1206.50,159.50 1212.50,157.50 1218.50,154.50 1224.50,147.50 1230.50,139.50 1236.50,132.50 1242.50,124.50 1248.50,119.50 1254.50,112.50 1260.50,106.50" fill="none" stroke="#00ff00" stroke-width="1" />
<polyline points="0.50,79.50 6.50,81.50 12.50,85.50 18.50,86.50 24.50,88.50 30.50,92.50 36.50,95.50 42.50,93.50 48.50,97.50 54.50,100.50 60.50,101.50 66.50,101.50 72.50,101.50 78.50,100.50 84.50,99.50 90.50,96.50 96.50,93.50 102.50,91.50 108.50,90.50 114.50,88.50 120.50,90.50 126.50,90.50 132.50,90.50 138.50,86.50 144.50,82.50 150.50,78.50 156.50,75.50 162.50,74.50 168.50,77.50 174.50,78.50 180.50,78.50 186.50,78.50 192.50,78.50 198.50,78.50 204.50,79.50 210.50,81.50 216.50,81.50 222.50,81.50 228.50,79.50 234.50,78.50 240.50,81.50 246.50,84.50 252.50,90.50 258.50,95.50 264.50,100.50 270.50,104.50 276.50,106.50 282.50,109.50 288.50,108.50 294.50,106.50 300.50,104.50 306.50,103.50 312.50,99.50 318.50,100.50 324.50,101.50 330.50,101.50 336.50,103.50 342.50,105.50 348.50,108.50 354.50,110.50 360.50,114.50 366.50,115.50 372.50,121.50 378.50,123.50 384.50,124.50 390.50,126.50 396.50,127.50 402.50,123.50 408.50,124.50 414.50,127.50 420.50,130.50 426.50,134.50 432.50,140.50 438.50,140.50 444.50,141.50 450.50,144.50 456.50,146.50 462.50,148.50 468.50,150.50 474.50,153.50 480.50,154.50 486.50,155.50 492.50,158.50 498.50,165.50 504.50,168.50 510.50,172.50 516.50,177.50 522.50,181.50 528.50,183.50 534.50,185.50 540.50,185.50 546.50,185.50 552.50,186.50 558.50,186.50 564.50,189.50 570.50,192.50 576.50,192.50 582.50,190.50 588.50,189.50 594.50,186.50 600.50,184.50 606.50,183.50 612.50,180.50 618.50,180.50 624.50,177.50 630.50,175.50 636.50,174.50 642.50,172.50 648.50,171.50 654.50,170.50 660.50,171.50 666.50,171.50 672.50,170.50 678.50,166.50 684.50,163.50 690.50,161.50 696.50,158.50 702.50,158.50 708.50,159.50 714.50,161.50 720.50,161.50 726.50,161.50 732.50,162.50 738.50,163.50 744.50,165.50 750.50,166.50 756.50,167.50 762.50,167.50 768.50,166.50 774.50,166.50 780.50,166.50 786.50,166.50 792.50,166.50 798.50,167.50 804.50,167.50 810.50,166.50 816.50,165.50 822.50,163.50 828.50,162.50 834.50,161.50 840.50,159.50 846.50,158.50 852.50,158.50 858.50,158.50 864.50,159.50 870.50,162.50 876.50,165.50 882.50,166.50 888.50,167.50 894.50,166.50 900.50,163.50 906.50,162.50 912.50,162.50 918.50,163.50 924.50,166.50 930.50,170.50 936.50,171.50 942.50,171.50 948.50,170.50 954.50,170.50 960.50,170.50 966.50,172.50 972.50,176.50 978.50,176.50 984.50,174.50 990.50,171.50 996.50,168.50 1002.50,163.50 1008.50,162.50 1014.50,162.50 1020.50,163.50 1026.50,163.50 1032.50,163.50 1038.50,163.50 1044.50,165.50 1050.50,166.50 1056.50,166.50 1062.50,166.50 1068.50,168.50 1074.50,171.50 1080.50,172.50 1086.50,174.50 1092.50,176.50 1098.50,176.50 1104.50,174.50 1110.50,171.50 1116.50,168.50 1122.50,166.50 1128.50,163.50 1134.50,162.50 1140.50,161.50 1146.50,162.50 1152.50,163.50 1158.50,165.50 1164.50,166.50 1170.50,167.50 1176.50,166.50 1182.50,163.50 1188.50,161.50 1194.50,158.50 1200.50,154.50 1206.50,152.50 1212.50,150.50 1218.50,146.50 1224.50,136.50 1230.50,124.50 1236.50,112.50 1242.50,99.50 1248.50,91.50 1254.50,88.50 1260.50,88.50" fill="none" stroke="#ff0000" stroke-width="1" />
<polyline points="0.50,82.50 6.50,82.50 12.50,93.50 18.50,93.50 24.50,93.50 30.50,96.50 36.50,96.50 42.50,96.50 48.50,96.50 54.50,96.50 60.50,96.50 66.50,93.50 72.50,93.50 78.50,96.50 84.50,96.50 90.50,96.50 96.50,96.50 102.50,96.50 108.50,96.50 114.50,96.50 120.50,93.50 126.50,93.50 132.50,93.50 138.50,86.50 144.50,86.50 150.50,86.50 156.50,86.50 162.50,86.50 168.50,86.50 174.50,80.50 180.50,80.50 186.50,80.50 192.50,80.50 198.50,80.50 204.50,80.50 210.50,77.50 216.50,77.50 222.50,77.50 228.50,77.50 234.50,77.50 240.50,83.50 246.50,86.50 252.50,90.50 258.50,90.50 264.50,90.50 270.50,96.50 276.50,96.50 282.50,96.50 288.50,99.50 294.50,103.50 300.50,109.50 306.50,109.50 312.50,109.50 318.50,109.50 324.50,109.50 330.50,106.50 336.50,106.50 342.50,106.50 348.50,109.50 354.50,109.50 360.50,109.50 366.50,109.50 372.50,115.50 378.50,115.50 384.50,119.50 390.50,122.50 396.50,122.50 402.50,125.50 408.50,128.50 414.50,128.50 420.50,132.50 426.50,132.50 432.50,138.50 438.50,138.50 444.50,138.50 450.50,138.50 456.50,141.50 462.50,144.50 468.50,144.50 474.50,144.50 480.50,144.50 486.50,148.50 492.50,151.50 498.50,157.50 504.50,167.50 510.50,167.50 516.50,167.50 522.50,167.50 528.50,174.50 534.50,174.50 540.50,174.50 546.50,177.50 552.50,183.50 558.50,183.50 564.50,186.50 570.50,186.50 576.50,186.50 582.50,186.50 588.50,186.50 594.50,190.50 600.50,190.50 606.50,186.50 612.50,186.50 618.50,186.50 624.50,183.50 630.50,180.50 636.50,177.50 642.50,177.50 648.50,177.50 654.50,177.50 660.50,174.50 666.50,174.50 672.50,170.50 678.50,167.50 684.50,167.50 690.50,167.50 696.50,167.50 702.50,167.50 708.50,164.50 714.50,164.50 720.50,164.50 726.50,161.50 732.50,161.50 738.50,164.50 744.50,164.50 750.50,164.50 756.50,164.50 762.50,164.50 768.50,164.50 774.50,164.50 780.50,167.50 786.50,167.50 792.50,165.50 798.50,165.50 804.50,165.50 810.50,167.50 816.50,166.50 822.50,166.50 828.50,164.50 834.50,164.50 840.50,164.50 846.50,164.50 852.50,164.50 858.50,164.50 864.50,164.50 870.50,164.50 876.50,164.50 882.50,164.50 888.50,164.50 894.50,164.50 900.50,161.50 906.50,161.50 912.50,161.50 918.50,164.50 924.50,164.50 930.50,164.50 936.50,164.50 942.50,164.50 948.50,164.50 954.50,164.50 960.50,170.50 966.50,174.50 972.50,174.50 978.50,174.50 984.50,174.50 990.50,170.50 996.50,170.50 1002.50,170.50 1008.50,170.50 1014.50,170.50 1020.50,170.50 1026.50,167.50 1032.50,164.50 1038.50,164.50 1044.50,164.50 1050.50,167.50 1056.50,167.50 1062.50,167.50 1068.50,167.50 1074.50,170.50 1080.50,170.50 1086.50,170.50 1092.50,170.50 1098.50,170.50 1104.50,170.50 1110.50,170.50 1116.50,170.50 1122.50,170.50 1128.50,170.50 1134.50,170.50 1140.50,170.50 1146.50,170.50 1152.50,167.50 1158.50,167.50 1164.50,164.50 1170.50,164.50 1176.50,164.50 1182.50,161.50 1188.50,161.50 1194.50,157.50 1200.50,154.50 1206.50,154.50 1212.50,154.50 1218.50,151.50 1224.50,128.50 1230.50,125.50 1236.50,119.50 1242.50,117.50 1248.50,115.50 1254.50,115.50 1260.50,115.50" fill="none" stroke="#ff0000" stroke-width="3" stroke-linejoin="bevel"/>
<g fill="#ff0000"><rect x="-1" y="81" width="3" height="3"/><rect x="5" y="81" width="3" height="3"/><rect x="11" y="92" width="3" height="3"/><rect x="17" y="92" width="3" height="3"/><rect x="23" y="92" width="3" height="3"/><rect x="29" y="95" width="3" height="3"/><rect x="35" y="95" width="3" height="3"/><rect x="41" y="95" width="3" height="3"/><rect x="47" y="95" width="3" height="3"/><rect x="53" y="95" width="3" height="3"/><rect x="59" y="95" width="3" height="3"/><rect x="65" y="92" width="3" height="3"/><rect x="71" y="92" width="3" height="3"/><rect x="77" y="95" width="3" height="3"/><rect x="83" y="95" width="3" height="3"/><rect x="89" y="95" width="3" height="3"/><rect x="95" y="95" width="3" height="3"/><rect x="101" y="95" width="3" height="3"/><rect x="107" y="95" width="3" height="3"/><rect x="113" y="95" width="3" height="3"/><rect x="119" y="92" width="3" height="3"/><rect x="125" y="92" width="3" height="3"/><rect x="131" y="92" width="3" height="3"/><rect x="137" y="85" width="3" height="3"/><rect x="143" y="85" width="3" height="3"/><rect x="149" y="85" width="3" height="3"/><rect x="155" y="85" width="3" height="3"/><rect x="161" y="85" width="3" height="3"/><rect x="167" y="85" width="3" height="3"/><rect x="173" y="79" width="3" height="3"/><rect x="179" y="79" width="3" height="3"/><rect x="185" y="79" width="3" height="3"/><rect x="191" y="79" width="3" height="3"/><rect x="197" y="79" width="3" height="3"/><rect x="203" y="79" width="3" height="3"/><rect x="209" y="76" width="3" height="3"/><rect x="215" y="76" width="3" height="3"/><rect x="221" y="76" width="3" height="3"/><rect x="227" y="76" width="3" height="3"/><rect x="233" y="76" width="3" height="3"/><rect x="239" y="82" width="3" height="3"/><rect x="245" y="85" width="3" height="3"/><rect x="251" y="89" width="3" height="3"/><rect x="257" y="89" width="3" height="3"/><rect x="263" y="89" width="3" height="3"/><rect x="269" y="95" width="3" height="3"/><rect x="275" y="95" width="3" height="3"/><rect x="281" y="95" width="3" height="3"/><rect x="287" y="98" width="3" height="3"/><rect x="293" y="102" width="3" height="3"/><rect x="299" y="108" width="3" height="3"/><rect x="305" y="108" width="3" height="3"/><rect x="311" y="108" width="3" height="3"/><rect x="317" y="108" width="3" height="3"/><rect x="323" y="108" width="3" height="3"/><rect x="329" y="105" width="3" height="3"/><rect x="335" y="105" width="3" height="3"/><rect x="341" y="105" width="3" height="3"/><rect x="347" y="108" width="3" height="3"/><rect x="353" y="108" width="3" height="3"/><rect x="359" y="108" width="3" height="3"/><rect x="365" y="108" width="3" height="3"/><rect x="371" y="114" width="3" height="3"/><rect x="377" y="114" width="3" height="3"/><rect x="383" y="118" width="3" height="3"/><rect x="389" y="121" width="3" height="3"/><rect x="395" y="121" width="3" height="3"/><rect x="401" y="124" width="3" height="3"/><rect x="407" y="127" width="3" height="3"/><rect x="413" y="127" width="3" height="3"/><rect x="419" y="131" width="3" height="3"/><rect x="425" y="131" width="3" height="3"/><rect x="431" y="137" width="3" height="3"/><rect x="437" y="137" width="3" height="3"/><rect x="443" y="137" width="3" height="3"/><rect x="449" y="137" width="3" height="3"/><rect x="455" y="140" width="3" height="3"/><rect x="461" y="143" width="3" height="3"/><rect x="467" y="143" width="3" height="3"/><rect x="473" y="143" width="3" height="3"/><rect x="479" y="143" width="3" height="3"/><rect x="485" y="147" width="3" height="3"/><rect x="491" y="150" width="3" height="3"/><rect x="497" y="156" width="3" height="3"/><rect x="503" y="166" width="3" height="3"/><rect x="509" y="166" width="3" height="3"/><rect x="515" y="166" width="3" height="3"/><rect x="521" y="166" width="3" height="3"/><rect x="527" y="173" width="3" height="3"/><rect x="533" y="173" width="3" height="3"/><rect x="539" y="173" width="3" height="3"/><rect x="545" y="176" width="3" height="3"/><rect x="551" y="182" width="3" height="3"/><rect x="557" y="182" width="3" height="3"/><rect x="563" y="185" width="3" height="3"/><rect x="569" y="185" width="3" height="3"/><rect x="575" y="185" width="3" height="3"/><rect x="581" y="185" width="3" height="3"/><rect x="587" y="185" width="3" height="3"/><rect x="593" y="189" width="3" height="3"/><rect x="599" y="189" width="3" height="3"/><rect x="605" y="185" width="3" height="3"/><rect x="611" y="185" width="3" height="3"/><rect x="617" y="185" width="3" height="3"/><rect x="623" y="182" width="3" height="3"/><rect x="629" y="179" width="3" height="3"/><rect x="635" y="176" width="3" height="3"/><rect x="641" y="176" width="3" height="3"/><rect x="647" y="176" width="3" height="3"/><rect x="653" y="176" width="3" height="3"/><rect x="659" y="173" width="3" height="3"/><rect x="665" y="173" width="3" height="3"/><rect x="671" y="169" width="3" height="3"/><rect x="677" y="166" width="3" height="3"/><rect x="683" y="166" width="3" height="3"/><rect x="689" y="166" width="3" height="3"/><rect x="695" y="166" width="3" height="3"/><rect x="701" y="166" width="3" height="3"/><rect x="707" y="163" width="3" height="3"/><rect x="713" y="163" width="3" height="3"/><rect x="719" y="163" width="3" height="3"/><rect x="725" y="160" width="3" height="3"/><rect x="731" y="160" width="3" height="3"/><rect x="737" y="163" width="3" height="3"/><rect x="743" y="163" width="3" height="3"/><rect x="749" y="163" width="3" height="3"/><rect x="755" y="163" width="3" height="3"/><rect x="761" y="163" width="3" height="3"/><rect x="767" y="163" width="3" height="3"/><rect x="773" y="163" width="3" height="3"/><rect x="779" y="166" width="3" height="3"/><rect x="785" y="166" width="3" height="3"/><rect x="791" y="164" width="3" height="3"/><rect x="797" y="164" width="3" height="3"/><rect x="803" y="164" width="3" height="3"/><rect x="809" y="166" width="3" height="3"/><rect x="815" y="165" width="3" height="3"/><rect x="821" y="165" width="3" height="3"/><rect x="827" y="163" width="3" height="3"/><rect x="833" y="163" width="3" height="3"/><rect x="839" y="163" width="3" height="3"/><rect x="845" y="163" width="3" height="3"/><rect x="851" y="163" width="3" height="3"/><rect x="857" y="163" width="3" height="3"/><rect x="863" y="163" width="3" height="3"/><rect x="869" y="163" width="3" height="3"/><rect x="875" y="163" width="3" height="3"/><rect x="881" y="163" width="3" height="3"/><rect x="887" y="163" width="3" height="3"/><rect x="893" y="163" width="3" height="3"/><rect x="899" y="160" width="3" height="3"/><rect x="905" y="160" width="3" height="3"/><rect x="911" y="160" width="3" height="3"/><rect x="917" y="163" width="3" height="3"/><rect x="923" y="163" width="3" height="3"/><rect x="929" y="163" width="3" height="3"/><rect x="935" y="163" width="3" height="3"/><rect x="941" y="163" width="3" height="3"/><rect x="947" y="163" width="3" height="3"/><rect x="953" y="163" width="3" height="3"/><rect x="959" y="169" width="3" height="3"/><rect x="965" y="173" width="3" height="3"/><rect x="971" y="173" width="3" height="3"/><rect x="977" y="173" width="3" height="3"/><rect x="983" y="173" width="3" height="3"/><rect x="989" y="169" width="3" height="3"/><rect x="995" y="169" width="3" height="3"/><rect x="1001" y="169" width="3" height="3"/><rect x="1007" y="169" width="3" height="3"/><rect x="1013" y="169" width="3" height="3"/><rect x="1019" y="169" width="3" height="3"/><rect x="1025" y="166" width="3" height="3"/><rect x="1031" y="163" width="3" height="3"/><rect x="1037" y="163" width="3" height="3"/><rect x="1043" y="163" width="3" height="3"/><rect x="1049" y="166" width="3" height="3"/><rect x="1055" y="166" width="3" height="3"/><rect x="1061" y="166" width="3" height="3"/><rect x="1067" y="166" width="3" height="3"/><rect x="1073" y="169" width="3" height="3"/><rect x="1079" y="169" width="3" height="3"/><rect x="1085" y="169" width="3" height="3"/><rect x="1091" y="169" width="3" height="3"/><rect x="1097" y="169" width="3" height="3"/><rect x="1103" y="169" width="3" height="3"/><rect x="1109" y="169" width="3" height="3"/><rect x="1115" y="169" width="3" height="3"/><rect x="1121" y="169" width="3" height="3"/><rect x="1127" y="169" width="3" height="3"/><rect x="1133" y="169" width="3" height="3"/><rect x="1139" y="169" width="3" height="3"/><rect x="1145" y="169" width="3" height="3"/><rect x="1151" y="166" width="3" height="3"/><rect x="1157" y="166" width="3" height="3"/><rect x="1163" y="163" width="3" height="3"/><rect x="1169" y="163" width="3" height="3"/><rect x="1175" y="163" width="3" height="3"/><rect x="1181" y="160" width="3" height="3"/><rect x="1187" y="160" width="3" height="3"/><rect x="1193" y="156" width="3" height="3"/><rect x="1199" y="153" width="3" height="3"/><rect x="1205" y="153" width="3" height="3"/><rect x="1211" y="153" width="3" height="3"/><rect x="1217" y="150" width="3" height="3"/><rect x="1223" y="127" width="3" height="3"/><rect x="1229" y="124" width="3" height="3"/><rect x="1235" y="118" width="3" height="3"/><rect x="1241" y="116" width="3" height="3"/><rect x="1247" y="114" width="3" height="3"/><rect x="1253" y="114" width="3" height="3"/><rect x="1259" y="114" width="3" height="3"/></g>
<polyline points="0.50,80.50 6.50,80.50 12.50,90.50 18.50,90.50 24.50,90.50 30.50,90.50 36.50,90.50 42.50,90.50 48.50,90.50 54.50,90.50 60.50,90.50 66.50,90.50 72.50,90.50 78.50,90.50 84.50,93.50 90.50,93.50 96.50,93.50 102.50,93.50 108.50,93.50 114.50,93.50 120.50,93.50 126.50,93.50 132.50,94.50 138.50,93.50 144.50,93.50 150.50,93.50 156.50,93.50 162.50,93.50 168.50,90.50 174.50,90.50 180.50,90.50 186.50,90.50 192.50,90.50 198.50,90.50 204.50,90.50 210.50,90.50 216.50,90.50 222.50,86.50 228.50,86.50 234.50,86.50 240.50,86.50 246.50,86.50 252.50,90.50 258.50,90.50 264.50,90.50 270.50,96.50 276.50,96.50 282.50,96.50 288.50,96.50 294.50,96.50 300.50,96.50 306.50,96.50 312.50,96.50 318.50,96.50 324.50,96.50 330.50,96.50 336.50,96.50 342.50,96.50 348.50,96.50 354.50,96.50 360.50,96.50 366.50,96.50 372.50,103.50 378.50,103.50 384.50,103.50 390.50,106.50 396.50,112.50 402.50,115.50 408.50,119.50 414.50,119.50 420.50,122.50 426.50,122.50 432.50,128.50 438.50,128.50 444.50,128.50 450.50,128.50 456.50,128.50 462.50,128.50 468.50,128.50 474.50,128.50 480.50,128.50 486.50,135.50 492.50,138.50 498.50,144.50 504.50,151.50 510.50,151.50 516.50,151.50 522.50,151.50 528.50,154.50 534.50,154.50 540.50,154.50 546.50,154.50 552.50,154.50 558.50,157.50 564.50,164.50 570.50,164.50 576.50,164.50 582.50,164.50 588.50,164.50 594.50,167.50 600.50,167.50 606.50,174.50 612.50,174.50 618.50,174.50 624.50,174.50 630.50,177.50 636.50,177.50 642.50,177.50 648.50,180.50 654.50,183.50 660.50,183.50 666.50,183.50 672.50,180.50 678.50,177.50 684.50,177.50 690.50,177.50 696.50,177.50 702.50,177.50 708.50,177.50 714.50,177.50 720.50,177.50 726.50,177.50 732.50,174.50 738.50,170.50 744.50,170.50 750.50,170.50 756.50,170.50 762.50,167.50 768.50,167.50 774.50,167.50 780.50,167.50 786.50,167.50 792.50,167.50 798.50,167.50 804.50,167.50 810.50,164.50 816.50,164.50 822.50,164.50 828.50,164.50 834.50,164.50 840.50,164.50 846.50,164.50 852.50,164.50 858.50,164.50 864.50,164.50 870.50,164.50 876.50,164.50 882.50,164.50 888.50,164.50 894.50,164.50 900.50,161.50 906.50,161.50 912.50,161.50 918.50,164.50 924.50,164.50 930.50,164.50 936.50,164.50 942.50,164.50 948.50,164.50 954.50,164.50 960.50,167.50 966.50,167.50 972.50,167.50 978.50,167.50 984.50,167.50 990.50,167.50 996.50,167.50 1002.50,167.50 1008.50,167.50 1014.50,167.50 1020.50,167.50 1026.50,167.50 1032.50,167.50 1038.50,167.50 1044.50,167.50 1050.50,167.50 1056.50,167.50 1062.50,170.50 1068.50,170.50 1074.50,170.50 1080.50,170.50 1086.50,170.50 1092.50,170.50 1098.50,170.50 1104.50,170.50 1110.50,167.50 1116.50,167.50 1122.50,167.50 1128.50,167.50 1134.50,167.50 1140.50,167.50 1146.50,167.50 1152.50,170.50 1158.50,170.50 1164.50,170.50 1170.50,170.50 1176.50,170.50 1182.50,167.50 1188.50,167.50 1194.50,164.50 1200.50,161.50 1206.50,161.50 1212.50,161.50 1218.50,157.50 1224.50,135.50 1230.50,135.50 1236.50,128.50 1242.50,128.50 1248.50,128.50 1254.50,125.50 1260.50,125.50" fill="none" stroke="#0000ff" stroke-width="3" stroke-linejoin="bevel"/>
<g fill="#0000ff"><rect x="-1" y="79" width="3" height="3"/><rect x="5" y="79" width="3" height="3"/><rect x="11" y="89" width="3" height="3"/><rect x="17" y="89" width="3" height="3"/><rect x="23" y="89" width="3" height="3"/><rect x="29" y="89" width="3" height="3"/><rect x="35" y="89" width="3" height="3"/><rect x="41" y="89" width="3" height="3"/><rect x="47" y="89" width="3" height="3"/><rect x="53" y="89" width="3" height="3"/><rect x="59" y="89" width="3" height="3"/><rect x="65" y="89" width="3" height="3"/><rect x="71" y="89" width="3" height="3"/><rect x="77" y="89" width="3" height="3"/><rect x="83" y="92" width="3" height="3"/><rect x="89" y="92" width="3" height="3"/><rect x="95" y="92" width="3" height="3"/><rect x="101" y="92" width="3" height="3"/><rect x="107" y="92" width="3" height="3"/><rect x="113" y="92" width="3" height="3"/><rect x="119" y="92" width="3" height="3"/><rect x="125" y="92" width="3" height="3"/><rect x="131" y="93" width="3" height="3"/><rect x="137" y="92" width="3" height="3"/><rect x="143" y="92" width="3" height="3"/><rect x="149" y="92" width="3" height="3"/><rect x="155" y="92" width="3" height="3"/><rect x="161" y="92" width="3" height="3"/><rect x="167" y="89" width="3" height="3"/><rect x="173" y="89" width="3" height="3"/><rect x="179" y="89" width="3" height="3"/><rect x="185" y="89" width="3" height="3"/><rect x="191" y="89" width="3" height="3"/><rect x="197" y="89" width="3" height="3"/><rect x="203" y="89" width="3" height="3"/><rect x="209" y="89" width="3" height="3"/><rect x="215" y="89" width="3" height="3"/><rect x="221" y="85" width="3" height="3"/><rect x="227" y="85" width="3" height="3"/><rect x="233" y="85" width="3" height="3"/><rect x="239" y="85" width="3" height="3"/><rect x="245" y="85" width="3" height="3"/><rect x="251" y="89" width="3" height="3"/><rect x="257" y="89" width="3" height="3"/><rect x="263" y="89" width="3" height="3"/><rect x="269" y="95" width="3" height="3"/><rect x="275" y="95" width="3" height="3"/><rect x="281" y="95" width="3" height="3"/><rect x="287" y="95" width="3" height="3"/><rect x="293" y="95" width="3" height="3"/><rect x="299" y="95" width="3" height="3"/><rect x="305" y="95" width="3" height="3"/><rect x="311" y="95" width="3" height="3"/><rect x="317" y="95" width="3" height="3"/><rect x="323" y="95" width="3" height="3"/><rect x="329" y="95" width="3" height="3"/><rect x="335" y="95" width="3" height="3"/><rect x="341" y="95" width="3" height="3"/><rect x="347" y="95" width="3" height="3"/><rect x="353" y="95" width="3" height="3"/><rect x="359" y="95" width="3" height="3"/><rect x="365" y="95" width="3" height="3"/><rect x="371" y="102" width="3" height="3"/><rect x="377" y="102" width="3" height="3"/><rect x="383" y="102" width="3" height="3"/><rect x="389" y="105" width="3" height="3"/><rect x="395" y="111" width="3" height="3"/><rect x="401" y="114" width="3" height="3"/><rect x="407" y="118" width="3" height="3"/><rect x="413" y="118" width="3" height="3"/><rect x="419" y="121" width="3" height="3"/><rect x="425" y="121" width="3" height="3"/><rect x="431" y="127" width="3" height="3"/><rect x="437" y="127" width="3" height="3"/><rect x="443" y="127" width="3" height="3"/><rect x="449" y="127" width="3" height="3"/><rect x="455" y="127" width="3" height="3"/><rect x="461" y="127" width="3" height="3"/><rect x="467" y="127" width="3" height="3"/><rect x="473" y="127" width="3" height="3"/><rect x="479" y="127" width="3" height="3"/><rect x="485" y="134" width="3" height="3"/><rect x="491" y="137" width="3" height="3"/><rect x="497" y="143" width="3" height="3"/><rect x="503" y="150" width="3" height="3"/><rect x="509" y="150" width="3" height="3"/><rect x="515" y="150" width="3" height="3"/><rect x="521" y="150" width="3" height="3"/><rect x="527" y="153" width="3" height="3"/><rect x="533" y="153" width="3" height="3"/><rect x="539" y="153" width="3" height="3"/><rect x="545" y="153" width="3" height="3"/><rect x="551" y="153" width="3" height="3"/><rect x="557" y="156" width="3" height="3"/><rect x="563" y="163" width="3" height="3"/><rect x="569" y="163" width="3" height="3"/><rect x="575" y="163" width="3" height="3"/><rect x="581" y="163" width="3" height="3"/><rect x="587" y="163" width="3" height="3"/><rect x="593" y="166" width="3" height="3"/><rect x="599" y="166" width="3" height="3"/><rect x="605" y="173" width="3" height="3"/><rect x="611" y="173" width="3" height="3"/><rect x="617" y="173" width="3" height="3"/><rect x="623" y="173" width="3" height="3"/><rect x="629" y="176" width="3" height="3"/><rect x="635" y="176" width="3" height="3"/><rect x="641" y="176" width="3" height="3"/><rect x="647" y="179" width="3" height="3"/><rect x="653" y="182" width="3" height="3"/><rect x="659" y="182" width="3" height="3"/><rect x="665" y="182" width="3" height="3"/><rect x="671" y="179" width="3" height="3"/><rect x="677" y="176" width="3" height="3"/><rect x="683" y="176" width="3" height="3"/><rect x="689" y="176" width="3" height="3"/><rect x="695" y="176" width="3" height="3"/><rect x="701" y="176" width="3" height="3"/><rect x="707" y="176" width="3" height="3"/><rect x="713" y="176" width="3" height="3"/><rect x="719" y="176" width="3" height="3"/><rect x="725" y="176" width="3" height="3"/><rect x="731" y="173" width="3" height="3"/><rect x="737" y="169" width="3" height="3"/><rect x="743" y="169" width="3" height="3"/><rect x="749" y="169" width="3" height="3"/><rect x="755" y="169" width="3" height="3"/><rect x="761" y="166" width="3" height="3"/><rect x="767" y="166" width="3" height="3"/><rect x="773" y="166" width="3" height="3"/><rect x="779" y="166" width="3" height="3"/><rect x="785" y="166" width="3" height="3"/><rect x="791" y="166" width="3" height="3"/><rect x="797" y="166" width="3" height="3"/><rect x="803" y="166" width="3" height="3"/><rect x="809" y="163" width="3" height="3"/><rect x="815" y="163" width="3" height="3"/><rect x="821" y="163" width="3" height="3"/><rect x="827" y="163" width="3" height="3"/><rect x="833" y="163" width="3" height="3"/><rect x="839" y="163" width="3" height="3"/><rect x="845" y="163" width="3" height="3"/><rect x="851" y="163" width="3" height="3"/><rect x="857" y="163" width="3" height="3"/><rect x="863" y="163" width="3" height="3"/><rect x="869" y="163" width="3" height="3"/><rect x="875" y="163" width="3" height="3"/><rect x="881" y="163" width="3" height="3"/><rect x="887" y="163" width="3" height="3"/><rect x="893" y="163" width="3" height="3"/><rect x="899" y="160" width="3" height="3"/><rect x="905" y="160" width="3" height="3"/><rect x="911" y="160" width="3" height="3"/><rect x="917" y="163" width="3" height="3"/><rect x="923" y="163" width="3" height="3"/><rect x="929" y="163" width="3" height="3"/><rect x="935" y="163" width="3" height="3"/><rect x="941" y="163" width="3" height="3"/><rect x="947" y="163" width="3" height="3"/><rect x="953" y="163" width="3" height="3"/><rect x="959" y="166" width="3" height="3"/><rect x="965" y="166" width="3" height="3"/><rect x="971" y="166" width="3" height="3"/><rect x="977" y="166" width="3" height="3"/><rect x="983" y="166" width="3" height="3"/><rect x="989" y="166" width="3" height="3"/><rect x="995" y="166" width="3" height="3"/><rect x="1001" y="166" width="3" height="3"/><rect x="1007" y="166" width="3" height="3"/><rect x="1013" y="166" width="3" height="3"/><rect x="1019" y="166" width="3" height="3"/><rect x="1025" y="166" width="3" height="3"/><rect x="1031" y="166" width="3" height="3"/><rect x="1037" y="166" width="3" height="3"/><rect x="1043" y="166" width="3" height="3"/><rect x="1049" y="166" width="3" height="3"/><rect x="1055" y="166" width="3" height="3"/><rect x="1061" y="169" width="3" height="3"/><rect x="1067" y="169" width="3" height="3"/><rect x="1073" y="169" width="3" height="3"/><rect x="1079" y="169" width="3" height="3"/><rect x="1085" y="169" width="3" height="3"/><rect x="1091" y="169" width="3" height="3"/><rect x="1097" y="169" width="3" height="3"/><rect x="1103" y="169" width="3" height="3"/><rect x="1109" y="166" width="3" height="3"/><rect x="1115" y="166" width="3" height="3"/><rect x="1121" y="166" width="3" height="3"/><rect x="1127" y="166" width="3" height="3"/><rect x="1133" y="166" width="3" height="3"/><rect x="1139" y="166" width="3" height="3"/><rect x="1145" y="166" width="3" height="3"/><rect x="1151" y="169" width="3" height="3"/><rect x="1157" y="169" width="3" height="3"/><rect x="1163" y="169" width="3" height="3"/><rect x="1169" y="169" width="3" height="3"/><rect x="1175" y="169" width="3" height="3"/><rect x="1181" y="166" width="3" height="3"/><rect x="1187" y="166" width="3" height="3"/><rect x="1193" y="163" width="3" height="3"/><rect x="1199" y="160" width="3" height="3"/><rect x="1205" y="160" width="3" height="3"/><rect x="1211" y="160" width="3" height="3"/><rect x="1217" y="156" width="3" height="3"/><rect x="1223" y="134" width="3" height="3"/><rect x="1229" y="134" width="3" height="3"/><rect x="1235" y="127" width="3" height="3"/><rect x="1241" y="127" width="3" height="3"/><rect x="1247" y="127" width="3" height="3"/><rect x="1253" y="124" width="3" height="3"/><rect x="1259" y="124" width="3" height="3"/></g>
<polyline points="0.50,77.50 6.50,77.50 12.50,77.50 18.50,83.50 24.50,77.50 30.50,77.50 36.50,77.50 42.50,77.50 48.50,83.50 54.50,83.50 60.50,83.50 66.50,77.50 72.50,77.50 78.50,77.50 84.50,77.50 90.50,96.50 96.50,96.50 102.50,103.50 108.50,103.50 114.50,103.50 120.50,115.50 126.50,109.50 132.50,115.50 138.50,96.50 144.50,96.50 150.50,103.50 156.50,103.50 162.50,96.50 168.50,103.50 174.50,103.50 180.50,103.50 186.50,109.50 192.50,109.50 198.50,115.50 204.50,115.50 210.50,122.50 216.50,115.50 222.50,135.50 228.50,128.50 234.50,122.50 240.50,128.50 246.50,122.50 252.50,115.50 258.50,135.50 264.50,135.50 270.50,141.50 276.50,141.50 282.50,148.50 288.50,135.50 294.50,141.50 300.50,154.50 306.50,154.50 312.50,154.50 318.50,148.50 324.50,154.50 330.50,161.50 336.50,161.50 342.50,167.50 348.50,180.50 354.50,174.50 360.50,180.50 366.50,186.50 372.50,186.50 378.50,186.50 384.50,186.50 390.50,180.50 396.50,186.50 402.50,193.50 408.50,186.50 414.50,199.50 420.50,193.50 426.50,186.50 432.50,186.50 438.50,180.50 444.50,186.50 450.50,180.50 456.50,180.50 462.50,174.50 468.50,180.50 474.50,174.50 480.50,167.50 486.50,174.50 492.50,167.50 498.50,174.50 504.50,167.50 510.50,174.50 516.50,174.50 522.50,161.50 528.50,154.50 534.50,154.50 540.50,161.50 546.50,161.50 552.50,161.50 558.50,161.50 564.50,161.50 570.50,161.50 576.50,161.50 582.50,167.50 588.50,167.50 594.50,167.50 600.50,167.50 606.50,167.50 612.50,167.50 618.50,161.50 624.50,167.50 630.50,167.50 636.50,167.50 642.50,167.50 648.50,167.50 654.50,167.50 660.50,161.50 666.50,161.50 672.50,161.50 678.50,161.50 684.50,161.50 690.50,154.50 696.50,154.50 702.50,161.50 708.50,161.50 714.50,167.50 720.50,167.50 726.50,167.50 732.50,167.50 738.50,167.50 744.50,161.50 750.50,154.50 756.50,161.50 762.50,167.50 768.50,174.50 774.50,174.50 780.50,174.50 786.50,167.50 792.50,167.50 798.50,167.50 804.50,174.50 810.50,174.50 816.50,180.50 822.50,186.50 828.50,167.50 834.50,161.50 840.50,161.50 846.50,167.50 852.50,161.50 858.50,161.50 864.50,161.50 870.50,167.50 876.50,167.50 882.50,161.50 888.50,161.50 894.50,167.50 900.50,174.50 906.50,167.50 912.50,161.50 918.50,174.50 924.50,180.50 930.50,180.50 936.50,174.50 942.50,174.50 948.50,174.50 954.50,167.50 960.50,167.50 966.50,161.50 972.50,161.50 978.50,161.50 984.50,161.50 990.50,161.50 996.50,167.50 1002.50,167.50 1008.50,167.50 1014.50,167.50 1020.50,167.50 1026.50,161.50 1032.50,154.50 1038.50,154.50 1044.50,154.50 1050.50,148.50 1056.50,148.50 1062.50,148.50 1068.50,135.50 1074.50,103.50 1080.50,90.50 1086.50,83.50 1092.50,83.50 1098.50,96.50 1104.50,90.50 1110.50,90.50 1116.50,83.50 1122.50,57.50 1128.50,51.50 1134.50,77.50 1140.50,77.50 1146.50,77.50 1152.50,90.50 1158.50,90.50 1164.50,90.50 1170.50,90.50 1176.50,96.50 1182.50,90.50 1188.50,90.50 1194.50,96.50 1200.50,96.50 1206.50,103.50 1212.50,96.50 1218.50,103.50 1224.50,109.50 1230.50,109.50 1236.50,109.50 1242.50,109.50 1248.50,109.50 1254.50,109.50 1260.50,109.50" fill="none" stroke="#008800" stroke-width="3" stroke-linejoin="bevel"/>
<g fill="#008800"><rect x="-1" y="76" width="3" height="3"/><rect x="5" y="76" width="3" height="3"/><rect x="11" y="76" width="3" height="3"/><rect x="17" y="82" width="3" height="3"/><rect x="23" y="76" width="3" height="3"/><rect x="29" y="76" width="3" height="3"/><rect x="35" y="76" width="3" height="3"/><rect x="41" y="76" width="3" height="3"/><rect x="47" y="82" width="3" height="3"/><rect x="53" y="82" width="3" height="3"/><rect x="59" y="82" width="3" height="3"/><rect x="65" y="76" width="3" height="3"/><rect x="71" y="76" width="3" height="3"/><rect x="77" y="76" width="3" height="3"/><rect x="83" y="76" width="3" height="3"/><rect x="89" y="95" width="3" height="3"/><rect x="95" y="95" width="3" height="3"/><rect x="101" y="102" width="3" height="3"/><rect x="107" y="102" width="3" height="3"/><rect x="113" y="102" width="3" height="3"/><rect x="119" y="114" width="3" height="3"/><rect x="125" y="108" width="3" height="3"/><rect x="131" y="114" width="3" height="3"/><rect x="137" y="95" width="3" height="3"/><rect x="143" y="95" width="3" height="3"/><rect x="149" y="102" width="3" height="3"/><rect x="155" y="102" width="3" height="3"/><rect x="161" y="95" width="3" height="3"/><rect x="167" y="102" width="3" height="3"/><rect x="173" y="102" width="3" height="3"/><rect x="179" y="102" width="3" height="3"/><rect x="185" y="108" width="3" height="3"/><rect x="191" y="108" width="3" height="3"/><rect x="197" y="114" width="3" height="3"/><rect x="203" y="114" width="3" height="3"/><rect x="209" y="121" width="3" height="3"/><rect x="215" y="114" width="3" height="3"/><rect x="221" y="134" width="3" height="3"/><rect x="227" y="127" width="3" height="3"/><rect x="233" y="121" width="3" height="3"/><rect x="239" y="127" width="3" height="3"/><rect x="245" y="121" width="3" height="3"/><rect x="251" y="114" width="3" height="3"/><rect x="257" y="134" width="3" height="3"/><rect x="263" y="134" width="3" height="3"/><rect x="269" y="140" width="3" height="3"/><rect x="275" y="140" width="3" height="3"/><rect x="281" y="147" width="3" height="3"/><rect x="287" y="134" width="3" height="3"/><rect x="293" y="140" width="3" height="3"/><rect x="299" y="153" width="3" height="3"/><rect x="305" y="153" width="3" height="3"/><rect x="311" y="153" width="3" height="3"/><rect x="317" y="147" width="3" height="3"/><rect x="323" y="153" width="3" height="3"/><rect x="329" y="160" width="3" height="3"/><rect x="335" y="160" width="3" height="3"/><rect x="341" y="166" width="3" height="3"/><rect x="347" y="179" width="3" height="3"/><rect x="353" y="173" width="3" height="3"/><rect x="359" y="179" width="3" height="3"/><rect x="365" y="185" width="3" height="3"/><rect x="371" y="185" width="3" height="3"/><rect x="377" y="185" width="3" height="3"/><rect x="383" y="185" width="3" height="3"/><rect x="389" y="179" width="3" height="3"/><rect x="395" y="185" width="3" height="3"/><rect x="401" y="192" width="3" height="3"/><rect x="407" y="185" width="3" height="3"/><rect x="413" y="198" width="3" height="3"/><rect x="419" y="192" width="3" height="3"/><rect x="425" y="185" width="3" height="3"/><rect x="431" y="185" width="3" height="3"/><rect x="437" y="179" width="3" height="3"/><rect x="443" y="185" width="3" height="3"/><rect x="449" y="179" width="3" height="3"/><rect x="455" y="179" width="3" height="3"/><rect x="461" y="173" width="3" height="3"/><rect x="467" y="179" width="3" height="3"/><rect x="473" y="173" width="3" height="3"/><rect x="479" y="166" width="3" height="3"/><rect x="485" y="173" width="3" height="3"/><rect x="491" y="166" width="3" height="3"/><rect x="497" y="173" width="3" height="3"/><rect x="503" y="166" width="3" height="3"/><rect x="509" y="173" width="3" height="3"/><rect x="515" y="173" width="3" height="3"/><rect x="521" y="160" width="3" height="3"/><rect x="527" y="153" width="3" height="3"/><rect x="533" y="153" width="3" height="3"/><rect x="539" y="160" width="3" height="3"/><rect x="545" y="160" width="3" height="3"/><rect x="551" y="160" width="3" height="3"/><rect x="557" y="160" width="3" height="3"/><rect x="563" y="160" width="3" height="3"/><rect x="569" y="160" width="3" height="3"/><rect x="575" y="160" width="3" height="3"/><rect x="581" y="166" width="3" height="3"/><rect x="587" y="166" width="3" height="3"/><rect x="593" y="166" width="3" height="3"/><rect x="599" y="166" width="3" height="3"/><rect x="605" y="166" width="3" height="3"/><rect x="611" y="166" width="3" height="3"/><rect x="617" y="160" width="3" height="3"/><rect x="623" y="166" width="3" height="3"/><rect x="629" y="166" width="3" height="3"/><rect x="635" y="166" width="3" height="3"/><rect x="641" y="166" width="3" height="3"/><rect x="647" y="166" width="3" height="3"/><rect x="653" y="166" width="3" height="3"/><rect x="659" y="160" width="3" height="3"/><rect x="665" y="160" width="3" height="3"/><rect x="671" y="160" width="3" height="3"/><rect x="677" y="160" width="3" height="3"/><rect x="683" y="160" width="3" height="3"/><rect x="689" y="153" width="3" height="3"/><rect x="695" y="153" width="3" height="3"/><rect x="701" y="160" width="3" height="3"/><rect x="707" y="160" width="3" height="3"/><rect x="713" y="166" width="3" height="3"/><rect x="719" y="166" width="3" height="3"/><rect x="725" y="166" width="3" height="3"/><rect x="731" y="166" width="3" height="3"/><rect x="737" y="166" width="3" height="3"/><rect x="743" y="160" width="3" height="3"/><rect x="749" y="153" width="3" height="3"/><rect x="755" y="160" width="3" height="3"/><rect x="761" y="166" width="3" height="3"/><rect x="767" y="173" width="3" height="3"/><rect x="773" y="173" width="3" height="3"/><rect x="779" y="173" width="3" height="3"/><rect x="785" y="166" width="3" height="3"/><rect x="791" y="166" width="3" height="3"/><rect x="797" y="166" width="3" height="3"/><rect x="803" y="173" width="3" height="3"/><rect x="809" y="173" width="3" height="3"/><rect x="815" y="179" width="3" height="3"/><rect x="821" y="185" width="3" height="3"/><rect x="827" y="166" width="3" height="3"/><rect x="833" y="160" width="3" height="3"/><rect x="839" y="160" width="3" height="3"/><rect x="845" y="166" width="3" height="3"/><rect x="851" y="160" width="3" height="3"/><rect x="857" y="160" width="3" height="3"/><rect x="863" y="160" width="3" height="3"/><rect x="869" y="166" width="3" height="3"/><rect x="875" y="166" width="3" height="3"/><rect x="881" y="160" width="3" height="3"/><rect x="887" y="160" width="3" height="3"/><rect x="893" y="166" width="3" height="3"/><rect x="899" y="173" width="3" height="3"/><rect x="905" y="166" width="3" height="3"/><rect x="911" y="160" width="3" height="3"/><rect x="917" y="173" width="3" height="3"/><rect x="923" y="179" width="3" height="3"/><rect x="929" y="179" width="3" height="3"/><rect x="935" y="173" width="3" height="3"/><rect x="941" y="173" width="3" height="3"/><rect x="947" y="173" width="3" height="3"/><rect x="953" y="166" width="3" height="3"/><rect x="959" y="166" width="3" height="3"/><rect x="965" y="160" width="3" height="3"/><rect x="971" y="160" width="3" height="3"/><rect x="977" y="160" width="3" height="3"/><rect x="983" y="160" width="3" height="3"/><rect x="989" y="160" width="3" height="3"/><rect x="995" y="166" width="3" height="3"/><rect x="1001" y="166" width="3" height="3"/><rect x="1007" y="166" width="3" height="3"/><rect x="1013" y="166" width="3" height="3"/><rect x="1019" y="166" width="3" height="3"/><rect x="1025" y="160" width="3" height="3"/><rect x="1031" y="153" width="3" height="3"/><rect x="1037" y="153" width="3" height="3"/><rect x="1043" y="153" width="3" height="3"/><rect x="1049" y="147" width="3" height="3"/><rect x="1055" y="147" width="3" height="3"/><rect x="1061" y="147" width="3" height="3"/><rect x="1067" y="134" width="3" height="3"/><rect x="1073" y="102" width="3" height="3"/><rect x="1079" y="89" width="3" height="3"/><rect x="1085" y="82" width="3" height="3"/><rect x="1091" y="82" width="3" height="3"/><rect x="1097" y="95" width="3" height="3"/><rect x="1103" y="89" width="3" height="3"/><rect x="1109" y="89" width="3" height="3"/><rect x="1115" y="82" width="3" height="3"/><rect x="1121" y="56" width="3" height="3"/><rect x="1127" y="50" width="3" height="3"/><rect x="1133" y="76" width="3" height="3"/><rect x="1139" y="76" width="3" height="3"/><rect x="1145" y="76" width="3" height="3"/><rect x="1151" y="89" width="3" height="3"/><rect x="1157" y="89" width="3" height="3"/><rect x="1163" y="89" width="3" height="3"/><rect x="1169" y="89" width="3" height="3"/><rect x="1175" y="95" width="3" height="3"/><rect x="1181" y="89" width="3" height="3"/><rect x="1187" y="89" width="3" height="3"/><rect x="1193" y="95" width="3" height="3"/><rect x="1199" y="95" width="3" height="3"/><rect x="1205" y="102" width="3" height="3"/><rect x="1211" y="95" width="3" height="3"/><rect x="1217" y="102" width="3" height="3"/><rect x="1223" y="108" width="3" height="3"/><rect x="1229" y="108" width="3" height="3"/><rect x="1235" y="108" width="3" height="3"/><rect x="1241" y="108" width="3" height="3"/><rect x="1247" y="108" width="3" height="3"/><rect x="1253" y="108" width="3" height="3"/><rect x="1259" y="108" width="3" height="3"/></g>
</g><g clip-path="url(#mc2)">
<polyline points="0.50,72.50 6.50,74.50 12.50,74.50 18.50,74.50 24.50,76.50 30.50,80.50 36.50,80.50 42.50,80.50 48.50,80.50 54.50,78.50 60.50,80.50 66.50,77.50 72.50,77.50 78.50,77.50 84.50,77.50 90.50,78.50 96.50,80.50 102.50,80.50 108.50,76.50 114.50,76.50 120.50,76.50 126.50,76.50 132.50,77.50 138.50,77.50 144.50,77.50 150.50,81.50 156.50,81.50 162.50,91.50 168.50,91.50 174.50,91.50 180.50,93.50 186.50,93.50 192.50,93.50 198.50,93.50 204.50,93.50 210.50,93.50 216.50,91.50 222.50,91.50 228.50,93.50 234.50,94.50 240.50,94.50 246.50,94.50 252.50,94.50 258.50,94.50 264.50,94.50 270.50,93.50 276.50,93.50 282.50,94.50 288.50,90.50 294.50,90.50 300.50,90.50 306.50,90.50 312.50,90.50 318.50,88.50 324.50,85.50 330.50,85.50 336.50,85.50 342.50,85.50 348.50,85.50 354.50,85.50 360.50,83.50 366.50,83.50 372.50,82.50 378.50,82.50 384.50,82.50 390.50,85.50 396.50,86.50 402.50,90.50 408.50,90.50 414.50,90.50 420.50,96.50 426.50,96.50 432.50,96.50 438.50,98.50 444.50,99.50 450.50,103.50 456.50,103.50 462.50,103.50 468.50,103.50 474.50,103.50 480.50,101.50 486.50,101.50 492.50,101.50 498.50,103.50 504.50,103.50 510.50,103.50 516.50,103.50 522.50,109.50 528.50,109.50 534.50,111.50 540.50,114.50 546.50,117.50 552.50,120.50 558.50,123.50 564.50,123.50 570.50,127.50 576.50,127.50 582.50,133.50 588.50,133.50 594.50,133.50 600.50,133.50 606.50,135.50 612.50,136.50 618.50,136.50 624.50,136.50 630.50,136.50 636.50,141.50 642.50,144.50 648.50,151.50 654.50,159.50 660.50,159.50 666.50,159.50 672.50,159.50 678.50,164.50 684.50,164.50 690.50,164.50 696.50,165.50 702.50,169.50 708.50,170.50 714.50,175.50 720.50,175.50 726.50,175.50 732.50,175.50 738.50,175.50 744.50,178.50 750.50,178.50 756.50,180.50 762.50,180.50 768.50,180.50 774.50,178.50 780.50,178.50 786.50,177.50 792.50,177.50 798.50,178.50 804.50,180.50 810.50,178.50 816.50,178.50 822.50,175.50 828.50,172.50 834.50,172.50 840.50,172.50 846.50,172.50 852.50,172.50 858.50,170.50 864.50,170.50 870.50,170.50 876.50,169.50 882.50,167.50 888.50,167.50 894.50,167.50 900.50,167.50 906.50,167.50 912.50,165.50 918.50,165.50 924.50,165.50 930.50,167.50 936.50,167.50 942.50,166.50 948.50,166.50 954.50,166.50 960.50,165.50 966.50,165.50 972.50,165.50 978.50,164.50 984.50,164.50 990.50,164.50 996.50,164.50 1002.50,164.50 1008.50,164.50 1014.50,164.50 1020.50,164.50 1026.50,164.50 1032.50,164.50 1038.50,164.50 1044.50,164.50 1050.50,161.50 1056.50,161.50 1062.50,161.50 1068.50,164.50 1074.50,164.50 1080.50,164.50 1086.50,164.50 1092.50,164.50 1098.50,164.50 1104.50,164.50 1110.50,169.50 1116.50,170.50 1122.50,170.50 1128.50,170.50 1134.50,170.50 1140.50,169.50 1146.50,169.50 1152.50,169.50 1158.50,169.50 1164.50,169.50 1170.50,169.50 1176.50,167.50 1182.50,165.50 1188.50,165.50 1194.50,165.50 1200.50,167.50 1206.50,167.50 1212.50,169.50 1218.50,169.50 1224.50,170.50 1230.50,170.50 1236.50,170.50 1242.50,170.50 1248.50,170.50 1254.50,170.50 1260.50,169.50" fill="none" stroke="#00ffff" stroke-width="1" />
<rect x="0" y="33" width="1" height="40" fill="#0000ff"/>
<rect x="6" y="33" width="1" height="42" fill="#0000ff"/>
<rect x="12" y="33" width="1" height="42" fill="#0000ff"/>
<rect x="18" y="33" width="1" height="42" fill="#0000ff"/>
<rect x="24" y="33" width="1" height="44" fill="#0000ff"/>
<rect x="30" y="33" width="1" height="48" fill="#0000ff"/>
<rect x="36" y="33" width="1" height="48" fill="#0000ff"/>
<rect x="42" y="33" width="1" height="48" fill="#0000ff"/>
<rect x="48" y="33" width="1" height="48" fill="#0000ff"/>
<rect x="54" y="33" width="1" height="46" fill="#0000ff"/>
<rect x="60" y="33" width="1" height="48" fill="#0000ff"/>
<rect x="66" y="37" width="1" height="41" fill="#0000ff"/>
<rect x="72" y="40" width="1" height="38" fill="#0000ff"/>
<rect x="78" y="53" width="1" height="25" fill="#0000ff"/>
<rect x="84" y="53" width="1" height="25" fill="#0000ff"/>
<rect x="90" y="59" width="1" height="20" fill="#0000ff"/>
<rect x="96" y="63" width="1" height="18" fill="#0000ff"/>
<rect x="102" y="63" width="1" height="18" fill="#0000ff"/>
<rect x="108" y="63" width="1" height="14" fill="#0000ff"/>
<rect x="114" y="63" width="1" height="14" fill="#0000ff"/>
<rect x="120" y="66" width="1" height="11" fill="#0000ff"/>
<rect x="126" y="66" width="1" height="11" fill="#0000ff"/>
<rect x="132" y="66" width="1" height="12" fill="#0000ff"/>
<rect x="138" y="69" width="1" height="9" fill="#0000ff"/>
<rect x="144" y="69" width="1" height="9" fill="#0000ff"/>
<rect x="150" y="69" width="1" height="13" fill="#0000ff"/>
<rect x="156" y="69" width="1" height="13" fill="#0000ff"/>
<rect x="162" y="75" width="1" height="17" fill="#0000ff"/>
<rect x="168" y="79" width="1" height="13" fill="#0000ff"/>
<rect x="174" y="82" width="1" height="10" fill="#0000ff"/>
<rect x="180" y="85" width="1" height="9" fill="#0000ff"/>
<rect x="186" y="85" width="1" height="9" fill="#0000ff"/>
<rect x="192" y="85" width="1" height="9" fill="#0000ff"/>
<rect x="198" y="85" width="1" height="9" fill="#0000ff"/>
<rect x="204" y="88" width="1" height="6" fill="#0000ff"/>
<rect x="210" y="88" width="1" height="6" fill="#0000ff"/>
<rect x="216" y="88" width="1" height="4" fill="#0000ff"/>
<rect x="222" y="88" width="1" height="4" fill="#0000ff"/>
<rect x="228" y="88" width="1" height="6" fill="#0000ff"/>
<rect x="234" y="92" width="1" height="3" fill="#0000ff"/>
<rect x="240" y="92" width="1" height="3" fill="#0000ff"/>
<rect x="246" y="92" width="1" height="3" fill="#0000ff"/>
<rect x="252" y="92" width="1" height="3" fill="#0000ff"/>
<rect x="258" y="92" width="1" height="3" fill="#0000ff"/>
<rect x="264" y="92" width="1" height="3" fill="#0000ff"/>
<rect x="270" y="92" width="1" height="2" fill="#0000ff"/>
<rect x="276" y="92" width="1" height="2" fill="#0000ff"/>
<rect x="282" y="92" width="1" height="3" fill="#0000ff"/>
<rect x="288" y="90" width="1" height="1" fill="#ff0000"/>
<rect x="294" y="90" width="1" height="1" fill="#ff0000"/>
<rect x="300" y="90" width="1" height="1" fill="#ff0000"/>
<rect x="306" y="90" width="1" height="1" fill="#ff0000"/>
<rect x="312" y="90" width="1" height="1" fill="#ff0000"/>
<rect x="318" y="88" width="1" height="3" fill="#ff0000"/>
<rect x="324" y="85" width="1" height="6" fill="#ff0000"/>
<rect x="330" y="85" width="1" height="6" fill="#ff0000"/>
<rect x="336" y="85" width="1" height="6" fill="#ff0000"/>
<rect x="342" y="85" width="1" height="6" fill="#ff0000"/>
<rect x="348" y="85" width="1" height="6" fill="#ff0000"/>
<rect x="354" y="85" width="1" height="6" fill="#ff0000"/>
<rect x="360" y="83" width="1" height="8" fill="#ff0000"/>
<rect x="366" y="83" width="1" height="8" fill="#ff0000"/>
<rect x="372" y="82" width="1" height="9" fill="#ff0000"/>
<rect x="378" y="82" width="1" height="9" fill="#ff0000"/>
<rect x="384" y="82" width="1" height="9" fill="#ff0000"/>
<rect x="390" y="85" width="1" height="9" fill="#ff0000"/>
<rect x="396" y="86" width="1" height="8" fill="#ff0000"/>
<rect x="402" y="90" width="1" height="4" fill="#ff0000"/>
<rect x="408" y="90" width="1" height="4" fill="#ff0000"/>
<rect x="414" y="90" width="1" height="4" fill="#ff0000"/>
<rect x="420" y="96" width="1" height="1" fill="#ff0000"/>
<rect x="426" y="96" width="1" height="1" fill="#ff0000"/>
<rect x="432" y="96" width="1" height="1" fill="#ff0000"/>
<rect x="438" y="98" width="1" height="1" fill="#0000ff"/>
<rect x="444" y="98" width="1" height="2" fill="#0000ff"/>
<rect x="450" y="98" width="1" height="6" fill="#0000ff"/>
<rect x="456" y="98" width="1" height="6" fill="#0000ff"/>
<rect x="462" y="98" width="1" height="6" fill="#0000ff"/>
<rect x="468" y="98" width="1" height="6" fill="#0000ff"/>
<rect x="474" y="98" width="1" height="6" fill="#0000ff"/>
<rect x="480" y="98" width="1" height="4" fill="#0000ff"/>
<rect x="486" y="98" width="1" height="4" fill="#0000ff"/>
<rect x="492" y="98" width="1" height="4" fill="#0000ff"/>
<rect x="498" y="98" width="1" height="6" fill="#0000ff"/>
<rect x="504" y="98" width="1" height="6" fill="#0000ff"/>
<rect x="510" y="98" width="1" height="6" fill="#0000ff"/>
<rect x="516" y="98" width="1" height="6" fill="#0000ff"/>
<rect x="522" y="105" width="1" height="5" fill="#0000ff"/>
<rect x="528" y="105" width="1" height="5" fill="#0000ff"/>
<rect x="534" y="105" width="1" height="7" fill="#0000ff"/>
<rect x="540" y="105" width="1" height="10" fill="#0000ff"/>
<rect x="546" y="105" width="1" height="13" fill="#0000ff"/>
<rect x="552" y="105" width="1" height="16" fill="#0000ff"/>
<rect x="558" y="108" width="1" height="16" fill="#0000ff"/>
<rect x="564" y="108" width="1" height="16" fill="#0000ff"/>
<rect x="570" y="111" width="1" height="17" fill="#0000ff"/>
<rect x="576" y="111" width="1" height="17" fill="#0000ff"/>
<rect x="582" y="117" width="1" height="17" fill="#0000ff"/>
<rect x="588" y="117" width="1" height="17" fill="#0000ff"/>
<rect x="594" y="117" width="1" height="17" fill="#0000ff"/>
<rect x="600" y="117" width="1" height="17" fill="#0000ff"/>
<rect x="606" y="117" width="1" height="19" fill="#0000ff"/>
<rect x="612" y="117" width="1" height="20" fill="#0000ff"/>
<rect x="618" y="117" width="1" height="20" fill="#0000ff"/>
<rect x="624" y="117" width="1" height="20" fill="#0000ff"/>
<rect x="630" y="117" width="1" height="20" fill="#0000ff"/>
<rect x="636" y="121" width="1" height="21" fill="#0000ff"/>
<rect x="642" y="121" width="1" height="24" fill="#0000ff"/>
<rect x="648" y="127" width="1" height="25" fill="#0000ff"/>
<rect x="654" y="130" width="1" height="30" fill="#0000ff"/>
<rect x="660" y="130" width="1" height="30" fill="#0000ff"/>
<rect x="666" y="130" width="1" height="30" fill="#0000ff"/>
<rect x="672" y="130" width="1" height="30" fill="#0000ff"/>
<rect x="678" y="134" width="1" height="31" fill="#0000ff"/>
<rect x="684" y="134" width="1" height="31" fill="#0000ff"/>
<rect x="690" y="134" width="1" height="31" fill="#0000ff"/>
<rect x="696" y="137" width="1" height="29" fill="#0000ff"/>
<rect x="702" y="143" width="1" height="27" fill="#0000ff"/>
<rect x="708" y="146" width="1" height="25" fill="#0000ff"/>
<rect x="714" y="150" width="1" height="26" fill="#0000ff"/>
<rect x="720" y="150" width="1" height="26" fill="#0000ff"/>
<rect x="726" y="150" width="1" height="26" fill="#0000ff"/>
<rect x="732" y="150" width="1" height="26" fill="#0000ff"/>
<rect x="738" y="150" width="1" height="26" fill="#0000ff"/>
<rect x="744" y="150" width="1" height="29" fill="#0000ff"/>
<rect x="750" y="150" width="1" height="29" fill="#0000ff"/>
<rect x="756" y="150" width="1" height="31" fill="#0000ff"/>
<rect x="762" y="150" width="1" height="31" fill="#0000ff"/>
<rect x="768" y="150" width="1" height="31" fill="#0000ff"/>
<rect x="774" y="150" width="1" height="29" fill="#0000ff"/>
<rect x="780" y="150" width="1" height="29" fill="#0000ff"/>
<rect x="786" y="150" width="1" height="28" fill="#0000ff"/>
<rect x="792" y="153" width="1" height="25" fill="#0000ff"/>
<rect x="798" y="156" width="1" height="23" fill="#0000ff"/>
<rect x="804" y="156" width="1" height="25" fill="#0000ff"/>
<rect x="810" y="159" width="1" height="20" fill="#0000ff"/>
<rect x="816" y="159" width="1" height="20" fill="#0000ff"/>
<rect x="822" y="159" width="1" height="17" fill="#0000ff"/>
<rect x="828" y="159" width="1" height="14" fill="#0000ff"/>
<rect x="834" y="159" width="1" height="14" fill="#0000ff"/>
<rect x="840" y="159" width="1" height="14" fill="#0000ff"/>
<rect x="846" y="159" width="1" height="14" fill="#0000ff"/>
<rect x="852" y="159" width="1" height="14" fill="#0000ff"/>
<rect x="858" y="159" width="1" height="12" fill="#0000ff"/>
<rect x="864" y="163" width="1" height="8" fill="#0000ff"/>
<rect x="870" y="166" width="1" height="5" fill="#0000ff"/>
<rect x="876" y="166" width="1" height="4" fill="#0000ff"/>
<rect x="882" y="166" width="1" height="2" fill="#0000ff"/>
<rect x="888" y="166" width="1" height="2" fill="#0000ff"/>
<rect x="894" y="166" width="1" height="2" fill="#0000ff"/>
<rect x="900" y="167" width="1" height="1" fill="#ff0000"/>
<rect x="906" y="167" width="1" height="1" fill="#ff0000"/>
<rect x="912" y="165" width="1" height="10" fill="#ff0000"/>
<rect x="918" y="165" width="1" height="10" fill="#ff0000"/>
<rect x="924" y="165" width="1" height="10" fill="#ff0000"/>
<rect x="930" y="167" width="1" height="8" fill="#ff0000"/>
<rect x="936" y="167" width="1" height="11" fill="#ff0000"/>
<rect x="942" y="166" width="1" height="12" fill="#ff0000"/>
<rect x="948" y="166" width="1" height="12" fill="#ff0000"/>
<rect x="954" y="166" width="1" height="12" fill="#ff0000"/>
<rect x="960" y="165" width="1" height="13" fill="#ff0000"/>
<rect x="966" y="165" width="1" height="13" fill="#ff0000"/>
<rect x="972" y="165" width="1" height="13" fill="#ff0000"/>
<rect x="978" y="164" width="1" height="14" fill="#ff0000"/>
<rect x="984" y="164" width="1" height="14" fill="#ff0000"/>
<rect x="990" y="164" width="1" height="14" fill="#ff0000"/>
<rect x="996" y="164" width="1" height="14" fill="#ff0000"/>
<rect x="1002" y="164" width="1" height="14" fill="#ff0000"/>
<rect x="1008" y="164" width="1" height="14" fill="#ff0000"/>
<rect x="1014" y="164" width="1" height="14" fill="#ff0000"/>
<rect x="1020" y="164" width="1" height="14" fill="#ff0000"/>
<rect x="1026" y="164" width="1" height="14" fill="#ff0000"/>
<rect x="1032" y="164" width="1" height="14" fill="#ff0000"/>
<rect x="1038" y="164" width="1" height="11" fill="#ff0000"/>
<rect x="1044" y="164" width="1" height="7" fill="#ff0000"/>
<rect x="1050" y="161" width="1" height="7" fill="#ff0000"/>
<rect x="1056" y="161" width="1" height="7" fill="#ff0000"/>
<rect x="1062" y="161" width="1" height="7" fill="#ff0000"/>
<rect x="1068" y="164" width="1" height="1" fill="#ff0000"/>
<rect x="1074" y="164" width="1" height="1" fill="#ff0000"/>
<rect x="1080" y="164" width="1" height="1" fill="#ff0000"/>
<rect x="1086" y="164" width="1" height="1" fill="#ff0000"/>
<rect x="1092" y="164" width="1" height="1" fill="#ff0000"/>
<rect x="1098" y="164" width="1" height="1" fill="#ff0000"/>
<rect x="1104" y="164" width="1" height="1" fill="#ff0000"/>
<rect x="1110" y="169" width="1" height="1" fill="#0000ff"/>
<rect x="1116" y="169" width="1" height="2" fill="#0000ff"/>
<rect x="1122" y="169" width="1" height="2" fill="#0000ff"/>
<rect x="1128" y="169" width="1" height="2" fill="#0000ff"/>
<rect x="1134" y="169" width="1" height="2" fill="#0000ff"/>
<rect x="1140" y="169" width="1" height="1" fill="#0000ff"/>
<rect x="1146" y="169" width="1" height="1" fill="#0000ff"/>
<rect x="1152" y="169" width="1" height="1" fill="#0000ff"/>
<rect x="1158" y="169" width="1" height="1" fill="#0000ff"/>
<rect x="1164" y="169" width="1" height="1" fill="#0000ff"/>
<rect x="1170" y="169" width="1" height="1" fill="#0000ff"/>
<rect x="1176" y="167" width="1" height="1" fill="#ff0000"/>
<rect x="1182" y="165" width="1" height="3" fill="#ff0000"/>
<rect x="1188" y="165" width="1" height="3" fill="#ff0000"/>
<rect x="1194" y="165" width="1" height="3" fill="#ff0000"/>
<rect x="1200" y="167" width="1" height="1" fill="#ff0000"/>
<rect x="1206" y="167" width="1" height="1" fill="#ff0000"/>
<rect x="1212" y="169" width="1" height="1" fill="#0000ff"/>
<rect x="1218" y="169" width="1" height="1" fill="#0000ff"/>
<rect x="1224" y="169" width="1" height="2" fill="#0000ff"/>
<rect x="1230" y="169" width="1" height="2" fill="#0000ff"/>
<rect x="1236" y="169" width="1" height="2" fill="#0000ff"/>
<rect x="1242" y="169" width="1" height="2" fill="#0000ff"/>
<rect x="1248" y="169" width="1" height="2" fill="#0000ff"/>
<rect x="1254" y="169" width="1" height="2" fill="#0000ff"/>
<rect x="1260" y="169" width="1" height="1" fill="#0000ff"/>
<polyline points="0.50,31.50 6.50,31.50 12.50,31.50 18.50,31.50 24.50,31.50 30.50,31.50 36.50,31.50 42.50,31.50 48.50,31.50 54.50,31.50 60.50,31.50 66.50,35.50 72.50,38.50 78.50,51.50 84.50,51.50 90.50,57.50 96.50,61.50 102.50,61.50 108.50,61.50 114.50,61.50 120.50,64.50 126.50,64.50 132.50,64.50 138.50,67.50 144.50,67.50 150.50,67.50 156.50,67.50 162.50,73.50 168.50,77.50 174.50,80.50 180.50,83.50 186.50,83.50 192.50,83.50 198.50,83.50 204.50,86.50 210.50,86.50 216.50,86.50 222.50,86.50 228.50,86.50 234.50,90.50 240.50,90.50 246.50,90.50 252.50,90.50 258.50,90.50 264.50,90.50 270.50,90.50 276.50,90.50 282.50,90.50 288.50,90.50 294.50,90.50 300.50,90.50 306.50,90.50 312.50,90.50 318.50,90.50 324.50,90.50 330.50,90.50 336.50,90.50 342.50,90.50 348.50,90.50 354.50,90.50 360.50,90.50 366.50,90.50 372.50,90.50 378.50,90.50 384.50,90.50 390.50,93.50 396.50,93.50 402.50,93.50 408.50,93.50 414.50,93.50 420.50,96.50 426.50,96.50 432.50,96.50 438.50,96.50 444.50,96.50 450.50,96.50 456.50,96.50 462.50,96.50 468.50,96.50 474.50,96.50 480.50,96.50 486.50,96.50 492.50,96.50 498.50,96.50 504.50,96.50 510.50,96.50 516.50,96.50 522.50,103.50 528.50,103.50 534.50,103.50 540.50,103.50 546.50,103.50 552.50,103.50 558.50,106.50 564.50,106.50 570.50,109.50 576.50,109.50 582.50,115.50 588.50,115.50 594.50,115.50 600.50,115.50 606.50,115.50 612.50,115.50 618.50,115.50 624.50,115.50 630.50,115.50 636.50,119.50 642.50,119.50 648.50,125.50 654.50,128.50 660.50,128.50 666.50,128.50 672.50,128.50 678.50,132.50 684.50,132.50 690.50,132.50 696.50,135.50 702.50,141.50 708.50,144.50 714.50,148.50 720.50,148.50 726.50,148.50 732.50,148.50 738.50,148.50 744.50,148.50 750.50,148.50 756.50,148.50 762.50,148.50 768.50,148.50 774.50,148.50 780.50,148.50 786.50,148.50 792.50,151.50 798.50,154.50 804.50,154.50 810.50,157.50 816.50,157.50 822.50,157.50 828.50,157.50 834.50,157.50 840.50,157.50 846.50,157.50 852.50,157.50 858.50,157.50 864.50,161.50 870.50,164.50 876.50,164.50 882.50,164.50 888.50,164.50 894.50,164.50 900.50,167.50 906.50,167.50 912.50,174.50 918.50,174.50 924.50,174.50 930.50,174.50 936.50,177.50 942.50,177.50 948.50,177.50 954.50,177.50 960.50,177.50 966.50,177.50 972.50,177.50 978.50,177.50 984.50,177.50 990.50,177.50 996.50,177.50 1002.50,177.50 1008.50,177.50 1014.50,177.50 1020.50,177.50 1026.50,177.50 1032.50,177.50 1038.50,174.50 1044.50,170.50 1050.50,167.50 1056.50,167.50 1062.50,167.50 1068.50,164.50 1074.50,164.50 1080.50,164.50 1086.50,164.50 1092.50,164.50 1098.50,164.50 1104.50,164.50 1110.50,167.50 1116.50,167.50 1122.50,167.50 1128.50,167.50 1134.50,167.50 1140.50,167.50 1146.50,167.50 1152.50,167.50 1158.50,167.50 1164.50,167.50 1170.50,167.50 1176.50,167.50 1182.50,167.50 1188.50,167.50 1194.50,167.50 1200.50,167.50 1206.50,167.50 1212.50,167.50 1218.50,167.50 1224.50,167.50 1230.50,167.50 1236.50,167.50 1242.50,167.50 1248.50,167.50 1254.50,167.50 1260.50,167.50" fill="none" stroke="#ff0000" stroke-width="1" />
</g><g clip-path="url(#mc)">
<polyline points="0.50,77.50 6.50,78.50 12.50,79.50 18.50,80.50 24.50,81.50 30.50,82.50 36.50,82.50 42.50,83.50 48.50,83.50 54.50,84.50 60.50,84.50 66.50,85.50 72.50,85.50 78.50,86.50 84.50,86.50 90.50,87.50 96.50,87.50 102.50,87.50 108.50,87.50 114.50,87.50 120.50,88.50 126.50,88.50 132.50,88.50 138.50,88.50 144.50,87.50 150.50,87.50 156.50,87.50 162.50,87.50 168.50,87.50 174.50,87.50 180.50,87.50 186.50,87.50 192.50,87.50 198.50,87.50 204.50,87.50 210.50,87.50 216.50,87.50 222.50,87.50 228.50,87.50 234.50,87.50 240.50,87.50 246.50,87.50 252.50,87.50 258.50,88.50 264.50,88.50 270.50,88.50 276.50,89.50 282.50,89.50 288.50,89.50 294.50,89.50 300.50,89.50 306.50,89.50 312.50,89.50 318.50,89.50 324.50,89.50 330.50,89.50 336.50,90.50 342.50,91.50 348.50,91.50 354.50,92.50 360.50,92.50 366.50,93.50 372.50,94.50 378.50,96.50 384.50,97.50 390.50,98.50 396.50,100.50 402.50,101.50 408.50,102.50 414.50,103.50 420.50,105.50 426.50,107.50 432.50,108.50 438.50,110.50 444.50,111.50 450.50,113.50 456.50,115.50 462.50,117.50 468.50,118.50 474.50,120.50 480.50,122.50 486.50,124.50 492.50,125.50 498.50,127.50 504.50,129.50 510.50,131.50 516.50,133.50 522.50,134.50 528.50,137.50 534.50,139.50 540.50,141.50 546.50,143.50 552.50,145.50 558.50,147.50 564.50,150.50 570.50,152.50 576.50,154.50 582.50,156.50 588.50,158.50 594.50,159.50 600.50,161.50 606.50,162.50 612.50,163.50 618.50,165.50 624.50,166.50 630.50,167.50 636.50,168.50 642.50,170.50 648.50,170.50 654.50,171.50 660.50,172.50 666.50,173.50 672.50,173.50 678.50,174.50 684.50,174.50 690.50,174.50 696.50,174.50 702.50,175.50 708.50,175.50 714.50,175.50 720.50,175.50 726.50,175.50 732.50,175.50 738.50,175.50 744.50,175.50 750.50,174.50 756.50,174.50 762.50,173.50 768.50,173.50 774.50,172.50 780.50,172.50 786.50,171.50 792.50,171.50 798.50,170.50 804.50,169.50 810.50,169.50 816.50,168.50 822.50,167.50 828.50,167.50 834.50,166.50 840.50,165.50 846.50,165.50 852.50,165.50 858.50,164.50 864.50,164.50 870.50,164.50 876.50,164.50 882.50,164.50 888.50,164.50 894.50,163.50 900.50,163.50 906.50,163.50 912.50,163.50 918.50,163.50 924.50,164.50 930.50,164.50 936.50,164.50 942.50,164.50 948.50,165.50 954.50,165.50 960.50,165.50 966.50,166.50 972.50,166.50 978.50,166.50 984.50,166.50 990.50,166.50 996.50,166.50 1002.50,166.50 1008.50,166.50 1014.50,165.50 1020.50,165.50 1026.50,165.50 1032.50,165.50 1038.50,165.50 1044.50,165.50 1050.50,165.50 1056.50,166.50 1062.50,166.50 1068.50,166.50 1074.50,166.50 1080.50,167.50 1086.50,168.50 1092.50,168.50 1098.50,168.50 1104.50,168.50 1110.50,168.50 1116.50,168.50 1122.50,168.50 1128.50,168.50 1134.50,168.50 1140.50,168.50 1146.50,168.50 1152.50,168.50 1158.50,168.50 1164.50,168.50 1170.50,168.50 1176.50,167.50 1182.50,167.50 1188.50,167.50 1194.50,166.50 1200.50,166.50 1206.50,165.50 1212.50,164.50 1218.50,163.50 1224.50,162.50 1230.50,160.50 1236.50,158.50 1242.50,156.50 1248.50,154.50 1254.50,152.50 1260.50,150.50" fill="none" stroke="#40e0d0" stroke-width="1" />
<rect x="0" y="77" width="1" height="7" fill="#ff0000"/>
<rect x="-1" y="77" width="3" height="7" fill="#ff0000"/>
<rect x="5" y="90" width="3" height="1" fill="#0000ff"/>
<rect x="12" y="96" width="1" height="20" fill="#0000ff"/>
<rect x="11" y="103" width="3" height="1" fill="#0000ff"/>
<rect x="18" y="77" width="1" height="27" fill="#ff0000"/>
<rect x="17" y="83" width="3" height="21" fill="#ff0000"/>
<rect x="24" y="77" width="1" height="27" fill="#0000ff"/>
<rect x="23" y="77" width="3" height="14" fill="#0000ff"/>
<rect x="30" y="83" width="1" height="21" fill="#0000ff"/>
<rect x="29" y="90" width="3" height="7" fill="#0000ff"/>
<rect x="36" y="96" width="1" height="14" fill="#0000ff"/>
<rect x="35" y="103" width="3" height="1" fill="#0000ff"/>
<rect x="42" y="96" width="1" height="14" fill="#ff0000"/>
<rect x="41" y="96" width="3" height="14" fill="#ff0000"/>
<rect x="48" y="83" width="1" height="21" fill="#0000ff"/>
<rect x="47" y="96" width="3" height="8" fill="#0000ff"/>
<rect x="54" y="96" width="1" height="14" fill="#0000ff"/>
<rect x="53" y="103" width="3" height="1" fill="#0000ff"/>
<rect x="60" y="103" width="1" height="7" fill="#0000ff"/>
<rect x="59" y="103" width="3" height="1" fill="#0000ff"/>
<rect x="66" y="96" width="1" height="14" fill="#0000ff"/>
<rect x="65" y="103" width="3" height="1" fill="#0000ff"/>
<rect x="72" y="90" width="1" height="14" fill="#ff0000"/>
<rect x="71" y="96" width="3" height="1" fill="#ff0000"/>
<rect x="78" y="90" width="1" height="14" fill="#0000ff"/>
<rect x="77" y="96" width="3" height="1" fill="#0000ff"/>
<rect x="84" y="90" width="1" height="14" fill="#ff0000"/>
<rect x="83" y="96" width="3" height="8" fill="#ff0000"/>
<rect x="90" y="83" width="1" height="21" fill="#ff0000"/>
<rect x="89" y="90" width="3" height="7" fill="#ff0000"/>
<rect x="96" y="83" width="1" height="8" fill="#0000ff"/>
<rect x="95" y="90" width="3" height="1" fill="#0000ff"/>
<rect x="102" y="83" width="1" height="21" fill="#ff0000"/>
<rect x="101" y="83" width="3" height="8" fill="#ff0000"/>
<rect x="108" y="83" width="1" height="14" fill="#0000ff"/>
<rect x="107" y="83" width="3" height="8" fill="#0000ff"/>
<rect x="114" y="83" width="1" height="8" fill="#0000ff"/>
<rect x="113" y="90" width="3" height="1" fill="#0000ff"/>
<rect x="120" y="83" width="1" height="21" fill="#0000ff"/>
<rect x="119" y="90" width="3" height="7" fill="#0000ff"/>
<rect x="126" y="83" width="1" height="8" fill="#ff0000"/>
<rect x="125" y="90" width="3" height="7" fill="#ff0000"/>
<rect x="132" y="83" width="1" height="8" fill="#ff0000"/>
<rect x="131" y="83" width="3" height="8" fill="#ff0000"/>
<rect x="138" y="70" width="1" height="21" fill="#ff0000"/>
<rect x="137" y="70" width="3" height="14" fill="#ff0000"/>
<rect x="144" y="70" width="1" height="8" fill="#0000ff"/>
<rect x="143" y="70" width="3" height="1" fill="#0000ff"/>
<rect x="150" y="70" width="1" height="14" fill="#0000ff"/>
<rect x="149" y="70" width="3" height="8" fill="#0000ff"/>
<rect x="156" y="77" width="1" height="14" fill="#ff0000"/>
<rect x="155" y="77" width="3" height="7" fill="#ff0000"/>
<rect x="162" y="77" width="1" height="7" fill="#0000ff"/>
<rect x="161" y="77" width="3" height="1" fill="#0000ff"/>
<rect x="168" y="77" width="1" height="7" fill="#0000ff"/>
<rect x="167" y="77" width="3" height="7" fill="#0000ff"/>
<rect x="174" y="70" width="1" height="14" fill="#ff0000"/>
<rect x="173" y="77" width="3" height="7" fill="#ff0000"/>
<rect x="180" y="70" width="1" height="14" fill="#0000ff"/>
<rect x="179" y="77" width="3" height="1" fill="#0000ff"/>
<rect x="186" y="77" width="1" height="7" fill="#0000ff"/>
<rect x="185" y="77" width="3" height="1" fill="#0000ff"/>
<rect x="192" y="70" width="1" height="14" fill="#ff0000"/>
<rect x="191" y="77" width="3" height="7" fill="#ff0000"/>
<rect x="198" y="77" width="1" height="7" fill="#0000ff"/>
<rect x="197" y="77" width="3" height="7" fill="#0000ff"/>
<rect x="204" y="77" width="1" height="7" fill="#0000ff"/>
<rect x="203" y="77" width="3" height="7" fill="#0000ff"/>
<rect x="210" y="77" width="1" height="7" fill="#0000ff"/>
<rect x="209" y="83" width="3" height="1" fill="#0000ff"/>
<rect x="216" y="70" width="1" height="14" fill="#ff0000"/>
<rect x="215" y="77" width="3" height="7" fill="#ff0000"/>
<rect x="222" y="70" width="1" height="14" fill="#0000ff"/>
<rect x="221" y="77" width="3" height="1" fill="#0000ff"/>
<rect x="228" y="70" width="1" height="14" fill="#0000ff"/>
<rect x="227" y="77" width="3" height="1" fill="#0000ff"/>
<rect x="234" y="70" width="1" height="14" fill="#0000ff"/>
<rect x="233" y="77" width="3" height="1" fill="#0000ff"/>
<rect x="240" y="77" width="1" height="20" fill="#0000ff"/>
<rect x="239" y="83" width="3" height="14" fill="#0000ff"/>
<rect x="246" y="90" width="1" height="14" fill="#0000ff"/>
<rect x="245" y="96" width="3" height="1" fill="#0000ff"/>
<rect x="252" y="96" width="1" height="14" fill="#0000ff"/>
<rect x="251" y="96" width="3" height="8" fill="#0000ff"/>
<rect x="258" y="96" width="1" height="8" fill="#0000ff"/>
<rect x="257" y="103" width="3" height="1" fill="#0000ff"/>
<rect x="264" y="96" width="1" height="14" fill="#0000ff"/>
<rect x="263" y="103" width="3" height="1" fill="#0000ff"/>
<rect x="270" y="96" width="1" height="27" fill="#0000ff"/>
<rect x="269" y="103" width="3" height="13" fill="#0000ff"/>
<rect x="276" y="109" width="1" height="14" fill="#ff0000"/>
<rect x="275" y="109" width="3" height="7" fill="#ff0000"/>
<rect x="282" y="109" width="1" height="7" fill="#0000ff"/>
<rect x="281" y="109" width="3" height="7" fill="#0000ff"/>
<rect x="288" y="96" width="1" height="20" fill="#ff0000"/>
<rect x="287" y="96" width="3" height="20" fill="#ff0000"/>
<rect x="294" y="96" width="1" height="8" fill="#0000ff"/>
<rect x="293" y="96" width="3" height="1" fill="#0000ff"/>
<rect x="300" y="96" width="1" height="8" fill="#0000ff"/>
<rect x="299" y="103" width="3" height="1" fill="#0000ff"/>
<rect x="306" y="96" width="1" height="14" fill="#0000ff"/>
<rect x="305" y="103" width="3" height="1" fill="#0000ff"/>
<rect x="312" y="96" width="1" height="8" fill="#ff0000"/>
<rect x="311" y="96" width="3" height="8" fill="#ff0000"/>
<rect x="318" y="96" width="1" height="8" fill="#0000ff"/>
<rect x="317" y="96" width="3" height="8" fill="#0000ff"/>
<rect x="324" y="96" width="1" height="8" fill="#0000ff"/>
<rect x="323" y="103" width="3" height="1" fill="#0000ff"/>
<rect x="330" y="96" width="1" height="20" fill="#0000ff"/>
<rect x="329" y="103" width="3" height="1" fill="#0000ff"/>
<rect x="336" y="103" width="1" height="13" fill="#0000ff"/>
<rect x="335" y="109" width="3" height="1" fill="#0000ff"/>
<rect x="342" y="109" width="1" height="7" fill="#0000ff"/>
<rect x="341" y="109" width="3" height="1" fill="#0000ff"/>
<rect x="348" y="109" width="1" height="14" fill="#0000ff"/>
<rect x="347" y="115" width="3" height="1" fill="#0000ff"/>
<rect x="354" y="115" width="1" height="8" fill="#0000ff"/>
<rect x="353" y="115" width="3" height="1" fill="#0000ff"/>
<rect x="360" y="115" width="1" height="8" fill="#0000ff"/>
<rect x="359" y="115" width="3" height="8" fill="#0000ff"/>
<rect x="366" y="115" width="1" height="8" fill="#ff0000"/>
<rect x="365" y="115" width="3" height="8" fill="#ff0000"/>
<rect x="372" y="115" width="1" height="21" fill="#0000ff"/>
<rect x="371" y="115" width="3" height="21" fill="#0000ff"/>
<rect x="378" y="128" width="1" height="8" fill="#ff0000"/>
<rect x="377" y="128" width="3" height="8" fill="#ff0000"/>
<rect x="384" y="122" width="1" height="14" fill="#ff0000"/>
<rect x="383" y="122" width="3" height="14" fill="#ff0000"/>
<rect x="390" y="115" width="1" height="14" fill="#0000ff"/>
<rect x="389" y="122" width="3" height="7" fill="#0000ff"/>
<rect x="396" y="122" width="1" height="7" fill="#ff0000"/>
<rect x="395" y="122" width="3" height="1" fill="#ff0000"/>
<rect x="402" y="115" width="1" height="14" fill="#ff0000"/>
<rect x="401" y="115" width="3" height="14" fill="#ff0000"/>
<rect x="408" y="122" width="1" height="20" fill="#0000ff"/>
<rect x="407" y="122" width="3" height="14" fill="#0000ff"/>
<rect x="414" y="128" width="1" height="14" fill="#ff0000"/>
<rect x="413" y="135" width="3" height="7" fill="#ff0000"/>
<rect x="420" y="128" width="1" height="21" fill="#0000ff"/>
<rect x="419" y="135" width="3" height="7" fill="#0000ff"/>
<rect x="426" y="135" width="1" height="14" fill="#0000ff"/>
<rect x="425" y="141" width="3" height="1" fill="#0000ff"/>
<rect x="432" y="141" width="1" height="21" fill="#0000ff"/>
<rect x="431" y="148" width="3" height="1" fill="#0000ff"/>
<rect x="438" y="128" width="1" height="27" fill="#ff0000"/>
<rect x="437" y="135" width="3" height="14" fill="#ff0000"/>
<rect x="444" y="135" width="1" height="14" fill="#0000ff"/>
<rect x="443" y="141" width="3" height="1" fill="#0000ff"/>
<rect x="450" y="135" width="1" height="27" fill="#0000ff"/>
<rect x="449" y="141" width="3" height="14" fill="#0000ff"/>
<rect x="455" y="154" width="3" height="1" fill="#0000ff"/>
<rect x="461" y="154" width="3" height="1" fill="#0000ff"/>
<rect x="468" y="148" width="1" height="14" fill="#ff0000"/>
<rect x="467" y="148" width="3" height="14" fill="#ff0000"/>
<rect x="474" y="148" width="1" height="14" fill="#0000ff"/>
<rect x="473" y="154" width="3" height="1" fill="#0000ff"/>
<rect x="480" y="154" width="1" height="8" fill="#0000ff"/>
<rect x="479" y="154" width="3" height="8" fill="#0000ff"/>
<rect x="486" y="154" width="1" height="14" fill="#0000ff"/>
<rect x="485" y="154" width="3" height="8" fill="#0000ff"/>
<rect x="492" y="154" width="1" height="14" fill="#0000ff"/>
<rect x="491" y="161" width="3" height="7" fill="#0000ff"/>
<rect x="498" y="161" width="1" height="20" fill="#0000ff"/>
<rect x="497" y="161" width="3" height="20" fill="#0000ff"/>
<rect x="504" y="174" width="1" height="13" fill="#ff0000"/>
<rect x="503" y="174" width="3" height="7" fill="#ff0000"/>
<rect x="510" y="174" width="1" height="13" fill="#0000ff"/>
<rect x="509" y="180" width="3" height="1" fill="#0000ff"/>
<rect x="516" y="174" width="1" height="13" fill="#0000ff"/>
<rect x="515" y="180" width="3" height="7" fill="#0000ff"/>
<rect x="522" y="180" width="1" height="7" fill="#0000ff"/>
<rect x="521" y="186" width="3" height="1" fill="#0000ff"/>
<rect x="528" y="186" width="1" height="8" fill="#0000ff"/>
<rect x="527" y="186" width="3" height="1" fill="#0000ff"/>
<rect x="534" y="180" width="1" height="14" fill="#0000ff"/>
<rect x="533" y="186" width="3" height="1" fill="#0000ff"/>
<rect x="540" y="174" width="1" height="13" fill="#ff0000"/>
<rect x="539" y="180" width="3" height="7" fill="#ff0000"/>
<rect x="546" y="180" width="1" height="7" fill="#0000ff"/>
<rect x="545" y="186" width="3" height="1" fill="#0000ff"/>
<rect x="552" y="186" width="1" height="8" fill="#0000ff"/>
<rect x="551" y="186" width="3" height="8" fill="#0000ff"/>
<rect x="558" y="180" width="1" height="14" fill="#ff0000"/>
<rect x="557" y="186" width="3" height="1" fill="#ff0000"/>
<rect x="564" y="186" width="1" height="14" fill="#0000ff"/>
<rect x="563" y="186" width="3" height="14" fill="#0000ff"/>
<rect x="570" y="186" width="1" height="14" fill="#ff0000"/>
<rect x="569" y="193" width="3" height="7" fill="#ff0000"/>
<rect x="576" y="186" width="1" height="14" fill="#ff0000"/>
<rect x="575" y="186" width="3" height="8" fill="#ff0000"/>
<rect x="582" y="180" width="1" height="14" fill="#0000ff"/>
<rect x="581" y="186" width="3" height="1" fill="#0000ff"/>
<rect x="588" y="180" width="1" height="7" fill="#ff0000"/>
<rect x="587" y="180" width="3" height="7" fill="#ff0000"/>
<rect x="594" y="180" width="1" height="7" fill="#0000ff"/>
<rect x="593" y="186" width="3" height="1" fill="#0000ff"/>
<rect x="600" y="180" width="1" height="7" fill="#ff0000"/>
<rect x="599" y="180" width="3" height="7" fill="#ff0000"/>
<rect x="606" y="174" width="1" height="13" fill="#0000ff"/>
<rect x="605" y="180" width="3" height="1" fill="#0000ff"/>
<rect x="612" y="174" width="1" height="7" fill="#ff0000"/>
<rect x="611" y="174" width="3" height="7" fill="#ff0000"/>
<rect x="618" y="174" width="1" height="7" fill="#0000ff"/>
<rect x="617" y="174" width="3" height="7" fill="#0000ff"/>
<rect x="624" y="167" width="1" height="8" fill="#ff0000"/>
<rect x="623" y="174" width="3" height="1" fill="#ff0000"/>
<rect x="630" y="167" width="1" height="8" fill="#ff0000"/>
<rect x="629" y="167" width="3" height="8" fill="#ff0000"/>
<rect x="636" y="167" width="1" height="8" fill="#0000ff"/>
<rect x="635" y="167" width="3" height="8" fill="#0000ff"/>
<rect x="642" y="167" width="1" height="8" fill="#ff0000"/>
<rect x="641" y="167" width="3" height="1" fill="#ff0000"/>
<rect x="648" y="167" width="1" height="8" fill="#0000ff"/>
<rect x="647" y="167" width="3" height="8" fill="#0000ff"/>
<rect x="654" y="167" width="1" height="14" fill="#ff0000"/>
<rect x="653" y="167" width="3" height="8" fill="#ff0000"/>
<rect x="660" y="167" width="1" height="8" fill="#0000ff"/>
<rect x="659" y="167" width="3" height="8" fill="#0000ff"/>
<rect x="666" y="167" width="1" height="8" fill="#0000ff"/>
<rect x="665" y="174" width="3" height="1" fill="#0000ff"/>
<rect x="672" y="161" width="1" height="14" fill="#ff0000"/>
<rect x="671" y="161" width="3" height="14" fill="#ff0000"/>
<rect x="678" y="154" width="1" height="12" fill="#ff0000"/>
<rect x="677" y="154" width="3" height="8" fill="#ff0000"/>
<rect x="684" y="154" width="1" height="8" fill="#0000ff"/>
<rect x="683" y="154" width="3" height="1" fill="#0000ff"/>
<rect x="690" y="154" width="1" height="14" fill="#0000ff"/>
<rect x="689" y="154" width="3" height="8" fill="#0000ff"/>
<rect x="696" y="161" width="1" height="7" fill="#ff0000"/>
<rect x="695" y="161" width="3" height="7" fill="#ff0000"/>
<rect x="702" y="154" width="1" height="14" fill="#0000ff"/>
<rect x="701" y="161" width="3" height="1" fill="#0000ff"/>
<rect x="708" y="154" width="1" height="14" fill="#0000ff"/>
<rect x="707" y="161" width="3" height="1" fill="#0000ff"/>
<rect x="714" y="154" width="1" height="14" fill="#ff0000"/>
<rect x="713" y="161" width="3" height="7" fill="#ff0000"/>
<rect x="720" y="154" width="1" height="8" fill="#0000ff"/>
<rect x="719" y="154" width="3" height="8" fill="#0000ff"/>
<rect x="726" y="154" width="1" height="14" fill="#0000ff"/>
<rect x="725" y="161" width="3" height="1" fill="#0000ff"/>
<rect x="732" y="161" width="1" height="7" fill="#0000ff"/>
<rect x="731" y="161" width="3" height="7" fill="#0000ff"/>
<rect x="738" y="167" width="1" height="8" fill="#ff0000"/>
<rect x="737" y="167" width="3" height="8" fill="#ff0000"/>
<rect x="743" y="167" width="3" height="1" fill="#0000ff"/>
<rect x="749" y="167" width="3" height="1" fill="#0000ff"/>
<rect x="755" y="167" width="3" height="1" fill="#0000ff"/>
<rect x="761" y="167" width="3" height="1" fill="#0000ff"/>
<rect x="768" y="161" width="1" height="7" fill="#ff0000"/>
<rect x="767" y="161" width="3" height="1" fill="#ff0000"/>
<rect x="773" y="167" width="3" height="1" fill="#0000ff"/>
<rect x="779" y="167" width="3" height="1" fill="#0000ff"/>
<rect x="786" y="161" width="1" height="7" fill="#0000ff"/>
<rect x="785" y="161" width="3" height="7" fill="#0000ff"/>
<rect x="792" y="165" width="1" height="6" fill="#0000ff"/>
<rect x="791" y="167" width="3" height="1" fill="#0000ff"/>
<rect x="797" y="167" width="3" height="1" fill="#0000ff"/>
<rect x="803" y="167" width="3" height="1" fill="#0000ff"/>
<rect x="810" y="161" width="1" height="14" fill="#ff0000"/>
<rect x="809" y="161" width="3" height="14" fill="#ff0000"/>
<rect x="816" y="158" width="1" height="6" fill="#0000ff"/>
<rect x="815" y="161" width="3" height="1" fill="#0000ff"/>
<rect x="822" y="158" width="1" height="6" fill="#0000ff"/>
<rect x="821" y="161" width="3" height="1" fill="#0000ff"/>
<rect x="828" y="154" width="1" height="10" fill="#0000ff"/>
<rect x="827" y="161" width="3" height="1" fill="#0000ff"/>
<rect x="834" y="154" width="1" height="9" fill="#0000ff"/>
<rect x="833" y="161" width="3" height="1" fill="#0000ff"/>
<rect x="840" y="154" width="1" height="8" fill="#ff0000"/>
<rect x="839" y="154" width="3" height="8" fill="#ff0000"/>
<rect x="845" y="154" width="3" height="1" fill="#0000ff"/>
<rect x="852" y="154" width="1" height="21" fill="#0000ff"/>
<rect x="851" y="154" width="3" height="8" fill="#0000ff"/>
<rect x="858" y="158" width="1" height="13" fill="#0000ff"/>
<rect x="857" y="161" width="3" height="1" fill="#0000ff"/>
<rect x="864" y="161" width="1" height="11" fill="#0000ff"/>
<rect x="863" y="161" width="3" height="7" fill="#0000ff"/>
<rect x="870" y="161" width="1" height="11" fill="#0000ff"/>
<rect x="869" y="161" width="3" height="7" fill="#0000ff"/>
<rect x="876" y="161" width="1" height="14" fill="#0000ff"/>
<rect x="875" y="167" width="3" height="1" fill="#0000ff"/>
<rect x="882" y="161" width="1" height="14" fill="#ff0000"/>
<rect x="881" y="167" width="3" height="8" fill="#ff0000"/>
<rect x="887" y="167" width="3" height="1" fill="#0000ff"/>
<rect x="894" y="154" width="1" height="14" fill="#ff0000"/>
<rect x="893" y="161" width="3" height="7" fill="#ff0000"/>
<rect x="900" y="148" width="1" height="14" fill="#ff0000"/>
<rect x="899" y="154" width="3" height="1" fill="#ff0000"/>
<rect x="906" y="148" width="1" height="14" fill="#0000ff"/>
<rect x="905" y="154" width="3" height="8" fill="#0000ff"/>
<rect x="912" y="154" width="1" height="21" fill="#0000ff"/>
<rect x="911" y="154" width="3" height="14" fill="#0000ff"/>
<rect x="918" y="161" width="1" height="20" fill="#0000ff"/>
<rect x="917" y="167" width="3" height="8" fill="#0000ff"/>
<rect x="924" y="167" width="1" height="14" fill="#0000ff"/>
<rect x="923" y="174" width="3" height="1" fill="#0000ff"/>
<rect x="930" y="161" width="1" height="14" fill="#0000ff"/>
<rect x="929" y="174" width="3" height="1" fill="#0000ff"/>
<rect x="936" y="167" width="1" height="14" fill="#ff0000"/>
<rect x="935" y="167" width="3" height="8" fill="#ff0000"/>
<rect x="942" y="167" width="1" height="14" fill="#0000ff"/>
<rect x="941" y="167" width="3" height="1" fill="#0000ff"/>
<rect x="948" y="167" width="1" height="8" fill="#0000ff"/>
<rect x="947" y="167" width="3" height="1" fill="#0000ff"/>
<rect x="954" y="167" width="1" height="14" fill="#0000ff"/>
<rect x="953" y="167" width="3" height="8" fill="#0000ff"/>
<rect x="960" y="167" width="1" height="20" fill="#0000ff"/>
<rect x="959" y="174" width="3" height="1" fill="#0000ff"/>
<rect x="966" y="167" width="1" height="14" fill="#0000ff"/>
<rect x="965" y="180" width="3" height="1" fill="#0000ff"/>
<rect x="972" y="174" width="1" height="13" fill="#0000ff"/>
<rect x="971" y="180" width="3" height="7" fill="#0000ff"/>
<rect x="978" y="165" width="1" height="16" fill="#ff0000"/>
<rect x="977" y="167" width="3" height="14" fill="#ff0000"/>
<rect x="984" y="161" width="1" height="7" fill="#ff0000"/>
<rect x="983" y="161" width="3" height="7" fill="#ff0000"/>
<rect x="990" y="154" width="1" height="14" fill="#ff0000"/>
<rect x="989" y="161" width="3" height="7" fill="#ff0000"/>
<rect x="996" y="154" width="1" height="14" fill="#0000ff"/>
<rect x="995" y="161" width="3" height="7" fill="#0000ff"/>
<rect x="1002" y="161" width="1" height="7" fill="#ff0000"/>
<rect x="1001" y="161" width="3" height="1" fill="#ff0000"/>
<rect x="1008" y="161" width="1" height="7" fill="#0000ff"/>
<rect x="1007" y="161" width="3" height="1" fill="#0000ff"/>
<rect x="1014" y="161" width="1" height="7" fill="#0000ff"/>
<rect x="1013" y="161" width="3" height="1" fill="#0000ff"/>
<rect x="1020" y="161" width="1" height="14" fill="#0000ff"/>
<rect x="1019" y="161" width="3" height="7" fill="#0000ff"/>
<rect x="1026" y="161" width="1" height="10" fill="#0000ff"/>
<rect x="1025" y="167" width="3" height="1" fill="#0000ff"/>
<rect x="1032" y="161" width="1" height="7" fill="#ff0000"/>
<rect x="1031" y="161" width="3" height="1" fill="#ff0000"/>
<rect x="1038" y="161" width="1" height="7" fill="#0000ff"/>
<rect x="1037" y="161" width="3" height="1" fill="#0000ff"/>
<rect x="1044" y="161" width="1" height="7" fill="#0000ff"/>
<rect x="1043" y="161" width="3" height="7" fill="#0000ff"/>
<rect x="1050" y="167" width="1" height="8" fill="#0000ff"/>
<rect x="1049" y="174" width="3" height="1" fill="#0000ff"/>
<rect x="1056" y="161" width="1" height="14" fill="#ff0000"/>
<rect x="1055" y="167" width="3" height="8" fill="#ff0000"/>
<rect x="1062" y="161" width="1" height="7" fill="#ff0000"/>
<rect x="1061" y="161" width="3" height="7" fill="#ff0000"/>
<rect x="1068" y="161" width="1" height="14" fill="#0000ff"/>
<rect x="1067" y="161" width="3" height="14" fill="#0000ff"/>
<rect x="1074" y="167" width="1" height="14" fill="#0000ff"/>
<rect x="1073" y="167" width="3" height="14" fill="#0000ff"/>
<rect x="1080" y="174" width="1" height="7" fill="#0000ff"/>
<rect x="1079" y="180" width="3" height="1" fill="#0000ff"/>
<rect x="1086" y="174" width="1" height="7" fill="#ff0000"/>
<rect x="1085" y="174" width="3" height="7" fill="#ff0000"/>
<rect x="1092" y="167" width="1" height="14" fill="#0000ff"/>
<rect x="1091" y="174" width="3" height="1" fill="#0000ff"/>
<rect x="1098" y="174" width="1" height="7" fill="#0000ff"/>
<rect x="1097" y="174" width="3" height="1" fill="#0000ff"/>
<rect x="1104" y="167" width="1" height="8" fill="#ff0000"/>
<rect x="1103" y="167" width="3" height="8" fill="#ff0000"/>
<rect x="1110" y="161" width="1" height="14" fill="#0000ff"/>
<rect x="1109" y="167" width="3" height="1" fill="#0000ff"/>
<rect x="1116" y="161" width="1" height="7" fill="#ff0000"/>
<rect x="1115" y="161" width="3" height="7" fill="#ff0000"/>
<rect x="1122" y="161" width="1" height="7" fill="#0000ff"/>
<rect x="1121" y="161" width="3" height="1" fill="#0000ff"/>
<rect x="1128" y="161" width="1" height="7" fill="#0000ff"/>
<rect x="1127" y="161" width="3" height="1" fill="#0000ff"/>
<rect x="1134" y="161" width="1" height="7" fill="#ff0000"/>
<rect x="1133" y="161" width="3" height="7" fill="#ff0000"/>
<rect x="1139" y="161" width="3" height="1" fill="#0000ff"/>
<rect x="1146" y="161" width="1" height="7" fill="#0000ff"/>
<rect x="1145" y="161" width="3" height="7" fill="#0000ff"/>
<rect x="1151" y="167" width="3" height="1" fill="#0000ff"/>
<rect x="1157" y="167" width="3" height="1" fill="#0000ff"/>
<rect x="1163" y="167" width="3" height="1" fill="#0000ff"/>
<rect x="1169" y="167" width="3" height="1" fill="#0000ff"/>
<rect x="1176" y="161" width="1" height="7" fill="#ff0000"/>
<rect x="1175" y="161" width="3" height="7" fill="#ff0000"/>
<rect x="1182" y="154" width="1" height="8" fill="#ff0000"/>
<rect x="1181" y="154" width="3" height="8" fill="#ff0000"/>
<rect x="1188" y="154" width="1" height="8" fill="#0000ff"/>
<rect x="1187" y="154" width="3" height="1" fill="#0000ff"/>
<rect x="1194" y="148" width="1" height="11" fill="#0000ff"/>
<rect x="1193" y="154" width="3" height="1" fill="#0000ff"/>
<rect x="1200" y="141" width="1" height="14" fill="#ff0000"/>
<rect x="1199" y="148" width="3" height="7" fill="#ff0000"/>
<rect x="1205" y="148" width="3" height="1" fill="#0000ff"/>
<rect x="1212" y="141" width="1" height="14" fill="#0000ff"/>
<rect x="1211" y="148" width="3" height="1" fill="#0000ff"/>
<rect x="1217" y="135" width="3" height="1" fill="#ff0000"/>
<rect x="1224" y="90" width="1" height="26" fill="#ff0000"/>
<rect x="1223" y="103" width="3" height="7" fill="#ff0000"/>
<rect x="1230" y="90" width="1" height="20" fill="#ff0000"/>
<rect x="1229" y="90" width="3" height="14" fill="#ff0000"/>
<rect x="1236" y="77" width="1" height="27" fill="#ff0000"/>
<rect x="1235" y="83" width="3" height="8" fill="#ff0000"/>
<rect x="1242" y="83" width="1" height="14" fill="#ff0000"/>
<rect x="1241" y="83" width="3" height="8" fill="#ff0000"/>
<rect x="1248" y="83" width="1" height="14" fill="#0000ff"/>
<rect x="1247" y="90" width="3" height="7" fill="#0000ff"/>
<rect x="1254" y="83" width="1" height="21" fill="#ff0000"/>
<rect x="1253" y="90" width="3" height="7" fill="#ff0000"/>
<rect x="1259" y="87" width="3" height="1" fill="#ff0000"/>
</g>
<rect x="1262" y="1" width="55" height="516" fill="#fff" />
<rect x="1261" y="1" width="1" height="517" fill="#000" />
<rect x="0" y="486" width="1317" height="1" fill="#000" />
<rect x="1262" y="19" width="5" height="1" fill="#000" />
<text y="25" ><tspan x="1269" textLength="29.4" lengthAdjust="spacingAndGlyphs" font-size="12.5">8,990</tspan></text>
<rect x="1262" y="57" width="5" height="1" fill="#000" />
<text y="63" ><tspan x="1269" textLength="29.4" lengthAdjust="spacingAndGlyphs" font-size="12.5">8,960</tspan></text>
<rect x="1262" y="96" width="5" height="1" fill="#000" />
<text y="102" ><tspan x="1269" textLength="29.4" lengthAdjust="spacingAndGlyphs" font-size="12.5">8,930</tspan></text>
<rect x="1262" y="135" width="5" height="1" fill="#000" />
<text y="141" ><tspan x="1269" textLength="29.4" lengthAdjust="spacingAndGlyphs" font-size="12.5">8,900</tspan></text>
<rect x="1262" y="174" width="5" height="1" fill="#000" />
<text y="180" ><tspan x="1269" textLength="29.4" lengthAdjust="spacingAndGlyphs" font-size="12.5">8,870</tspan></text>
<rect x="1262" y="231" width="5" height="1" fill="#000" />
<text y="237" ><tspan x="1269" textLength="35.4" lengthAdjust="spacingAndGlyphs" font-size="12.5">215.00</tspan></text>
<rect x="1262" y="269" width="5" height="1" fill="#000" />
<text y="275" ><tspan x="1269" textLength="29.4" lengthAdjust="spacingAndGlyphs" font-size="12.5">75.00</tspan></text>
<rect x="1262" y="322" width="5" height="1" fill="#000" />
<text y="328" ><tspan x="1269" textLength="29.4" lengthAdjust="spacingAndGlyphs" font-size="12.5">16.00</tspan></text>
<rect x="1262" y="359" width="5" height="1" fill="#000" />
<text y="365" ><tspan x="1269" textLength="29.4" lengthAdjust="spacingAndGlyphs" font-size="12.5">-2.50</tspan></text>
<rect x="1262" y="413" width="5" height="1" fill="#000" />
<text y="419" ><tspan x="1269" textLength="35.4" lengthAdjust="spacingAndGlyphs" font-size="12.5">100.00</tspan></text>
<rect x="1262" y="452" width="5" height="1" fill="#000" />
<text y="458" ><tspan x="1269" textLength="29.4" lengthAdjust="spacingAndGlyphs" font-size="12.5">35.00</tspan></text>
<rect x="12" y="487" width="1" height="9" fill="#000" />
<text y="506" ><tspan x="12" textLength="29.4" lengthAdjust="spacingAndGlyphs" font-size="12.5">07/09</tspan></text>
<rect x="132" y="487" width="1" height="4" fill="#000" />
<text y="506" ><tspan x="132" textLength="29.4" lengthAdjust="spacingAndGlyphs" font-size="12.5">10:40</tspan></text>
<rect x="228" y="487" width="1" height="4" fill="#000" />
<text y="506" ><tspan x="228" textLength="29.4" lengthAdjust="spacingAndGlyphs" font-size="12.5">12:00</tspan></text>
<rect x="324" y="487" width="1" height="4" fill="#000" />
<text y="506" ><tspan x="324" textLength="29.4" lengthAdjust="spacingAndGlyphs" font-size="12.5">13:20</tspan></text>
<rect x="420" y="487" width="1" height="4" fill="#000" />
<text y="506" ><tspan x="420" textLength="29.4" lengthAdjust="spacingAndGlyphs" font-size="12.5">14:40</tspan></text>
<rect x="528" y="487" width="1" height="4" fill="#000" />
<text y="506" ><tspan x="528" textLength="29.4" lengthAdjust="spacingAndGlyphs" font-size="12.5">17:20</tspan></text>
<rect x="624" y="487" width="1" height="4" fill="#000" />
<text y="506" ><tspan x="624" textLength="29.4" lengthAdjust="spacingAndGlyphs" font-size="12.5">18:40</tspan></text>
<rect x="720" y="487" width="1" height="4" fill="#000" />
<text y="506" ><tspan x="720" textLength="29.4" lengthAdjust="spacingAndGlyphs" font-size="12.5">20:00</tspan></text>
<rect x="816" y="487" width="1" height="4" fill="#000" />
<text y="506" ><tspan x="816" textLength="29.4" lengthAdjust="spacingAndGlyphs" font-size="12.5">21:20</tspan></text>
<rect x="912" y="487" width="1" height="4" fill="#000" />
<text y="506" ><tspan x="912" textLength="29.4" lengthAdjust="spacingAndGlyphs" font-size="12.5">22:40</tspan></text>
<rect x="1008" y="487" width="1" height="9" fill="#000" />
<text y="506" ><tspan x="1008" textLength="29.4" lengthAdjust="spacingAndGlyphs" font-size="12.5">07/10</tspan></text>
<rect x="1104" y="487" width="1" height="4" fill="#000" />
<text y="506" ><tspan x="1104" textLength="29.4" lengthAdjust="spacingAndGlyphs" font-size="12.5">01:20</tspan></text>
<rect x="1200" y="487" width="1" height="4" fill="#000" />
<text y="506" ><tspan x="1200" textLength="29.4" lengthAdjust="spacingAndGlyphs" font-size="12.5">02:40</tspan></text>
<rect x="1248" y="487" width="1" height="4" fill="#000" />
<text y="506" ><tspan x="1248" textLength="11.4" lengthAdjust="spacingAndGlyphs" font-size="12.5">09</tspan></text>
<text y="14" ><tspan x="4">日経</tspan><tspan x="28" textLength="95.4" lengthAdjust="spacingAndGlyphs" font-size="12.5">225mini 12/09( 5</tspan><tspan x="124">分</tspan><tspan x="136" textLength="161.4" lengthAdjust="spacingAndGlyphs" font-size="12.5">, 2012/07/06 - 2012/07/10 )</tspan></text>
<text y="14" ><tspan x="318">移動平均</tspan><tspan x="366" textLength="77.4" lengthAdjust="spacingAndGlyphs" font-size="12.5">( Close, 40 )</tspan></text>
<text y="14" ><tspan x="464">一目均衡表</tspan><tspan x="524" textLength="77.4" lengthAdjust="spacingAndGlyphs" font-size="12.5">( 9, 26, 52 )</tspan></text>
<text y="14" ><tspan x="622">移動平均</tspan><tspan x="670" textLength="77.4" lengthAdjust="spacingAndGlyphs" font-size="12.5">( Close, 75 )</tspan></text>
<text y="14" ><tspan x="768">移動平均</tspan><tspan x="816" textLength="77.4" lengthAdjust="spacingAndGlyphs" font-size="12.5">( Close, 75 )</tspan></text>
<text y="14" ><tspan x="914">移動平均</tspan><tspan x="962" textLength="77.4" lengthAdjust="spacingAndGlyphs" font-size="12.5">( Close, 10 )</tspan></text>
<text y="14" ><tspan x="1060">移動平均</tspan><tspan x="1108" textLength="83.4" lengthAdjust="spacingAndGlyphs" font-size="12.5">( Close, 150 )</tspan></text>
<text y="28" ><tspan x="4">移動平均</tspan><tspan x="52" textLength="77.4" lengthAdjust="spacingAndGlyphs" font-size="12.5">( Close, 20 )</tspan></text>
<text y="28" ><tspan x="150">移動平均</tspan><tspan x="198" textLength="71.4" lengthAdjust="spacingAndGlyphs" font-size="12.5">( Close, 5 )</tspan></text>
<text y="28" ><tspan x="290">移動平均</tspan><tspan x="338" textLength="77.4" lengthAdjust="spacingAndGlyphs" font-size="12.5">( Close, 25 )</tspan></text>
<text y="227" ><tspan x="3">出来高</tspan></text>
<text y="317" ><tspan x="3" textLength="101.4" lengthAdjust="spacingAndGlyphs" font-size="12.5">MACD( 12, 26, 9 )</tspan></text>
<text y="408" ><tspan x="3">スロー・ストキャスティクス</tspan><tspan x="159" textLength="101.4" lengthAdjust="spacingAndGlyphs" font-size="12.5">( 14, 3, 80, 20 )</tspan></text>
<rect x="1264.5" y="287.5" width="39" height="14" fill="#fff" stroke="#000" stroke-width="1"/>
<text x="1267.2" y="299.5" style="font-size:16px">×</text>
<text y="299" ><tspan x="1283.5" textLength="17.4" lengthAdjust="spacingAndGlyphs" font-size="12.5">100</tspan></text>
<rect x="1309" y="3" width="8" height="13" fill="#fff" />
<rect x="1309" y="3" width="8" height="1" fill="#c8c8c8" />
<rect x="1309" y="3" width="1" height="13" fill="#c0c0c0" />
<rect x="1309" y="15" width="8" height="1" fill="#909090" />
<polygon points="1312,8 1317,8 1317,13" fill="#808080"/>
<rect x="1311" y="7" width="6" height="1" fill="#000" />
<rect x="1312" y="8" width="1" height="1" fill="#000" />
<rect x="1313" y="9" width="1" height="1" fill="#000" />
<rect x="1314" y="10" width="1" height="1" fill="#000" />
<rect x="1315" y="11" width="1" height="1" fill="#000" />
<rect x="1316" y="12" width="1" height="1" fill="#000" />
<rect x="1309" y="215" width="8" height="13" fill="#fff" />
<rect x="1309" y="215" width="8" height="1" fill="#c8c8c8" />
<rect x="1309" y="215" width="1" height="13" fill="#c0c0c0" />
<rect x="1309" y="227" width="8" height="1" fill="#909090" />
<polygon points="1312,220 1317,220 1317,225" fill="#808080"/>
<rect x="1311" y="219" width="6" height="1" fill="#000" />
<rect x="1312" y="220" width="1" height="1" fill="#000" />
<rect x="1313" y="221" width="1" height="1" fill="#000" />
<rect x="1314" y="222" width="1" height="1" fill="#000" />
<rect x="1315" y="223" width="1" height="1" fill="#000" />
<rect x="1316" y="224" width="1" height="1" fill="#000" />
<rect x="1309" y="306" width="8" height="13" fill="#fff" />
<rect x="1309" y="306" width="8" height="1" fill="#c8c8c8" />
<rect x="1309" y="306" width="1" height="13" fill="#c0c0c0" />
<rect x="1309" y="318" width="8" height="1" fill="#909090" />
<polygon points="1312,311 1317,311 1317,316" fill="#808080"/>
<rect x="1311" y="310" width="6" height="1" fill="#000" />
<rect x="1312" y="311" width="1" height="1" fill="#000" />
<rect x="1313" y="312" width="1" height="1" fill="#000" />
<rect x="1314" y="313" width="1" height="1" fill="#000" />
<rect x="1315" y="314" width="1" height="1" fill="#000" />
<rect x="1316" y="315" width="1" height="1" fill="#000" />
<rect x="1309" y="397" width="8" height="13" fill="#fff" />
<rect x="1309" y="397" width="8" height="1" fill="#c8c8c8" />
<rect x="1309" y="397" width="1" height="13" fill="#c0c0c0" />
<rect x="1309" y="409" width="8" height="1" fill="#909090" />
<polygon points="1312,402 1317,402 1317,407" fill="#808080"/>
<rect x="1311" y="401" width="6" height="1" fill="#000" />
<rect x="1312" y="402" width="1" height="1" fill="#000" />
<rect x="1313" y="403" width="1" height="1" fill="#000" />
<rect x="1314" y="404" width="1" height="1" fill="#000" />
<rect x="1315" y="405" width="1" height="1" fill="#000" />
<rect x="1316" y="406" width="1" height="1" fill="#000" />
<rect x="0" y="517" width="1121" height="4" fill="#f8f8f8" />
<rect x="0" y="517" width="14" height="1" fill="#e6e6e6" />
<rect x="0" y="518" width="14" height="1" fill="#ffffff" />
<rect x="1" y="519" width="12" height="2" fill="#ececec" />
<rect x="0" y="519" width="1" height="2" fill="#ffffff" />
<rect x="14" y="517" width="2" height="4" fill="#707070" />
<rect x="16" y="517" width="1" height="4" fill="#ffffff" />
<rect x="442" y="517" width="405" height="1" fill="#e6e6e6" />
<rect x="442" y="518" width="405" height="1" fill="#ffffff" />
<rect x="443" y="519" width="403" height="2" fill="#ececec" />
<rect x="442" y="519" width="1" height="2" fill="#ffffff" />
<rect x="847" y="517" width="2" height="4" fill="#707070" />
<rect x="849" y="517" width="1" height="4" fill="#ffffff" />
<rect x="984" y="517" width="16" height="4" fill="#ffffff" />
<rect x="984" y="517" width="16" height="1" fill="#d8d8d8" />
<rect x="984" y="517" width="1" height="4" fill="#d8d8d8" />
<rect x="986" y="519" width="12" height="2" fill="#f0f0f0" />
<rect x="1000" y="517" width="1" height="4" fill="#707070" />
<rect x="1001" y="517" width="120" height="4" fill="#eeeeee" />
<rect x="1011" y="519" width="4" height="2" fill="#ffffff" />
<rect x="1015" y="519" width="1" height="2" fill="#808080" />
<rect x="1121" y="517" width="16" height="4" fill="#ffffff" />
<rect x="1121" y="517" width="16" height="1" fill="#909090" />
<rect x="1121" y="517" width="1" height="4" fill="#909090" />
<rect x="1123" y="519" width="13" height="2" fill="#e4e4e4" />
<rect x="1138" y="517" width="16" height="4" fill="#ffffff" />
<rect x="1138" y="517" width="16" height="1" fill="#909090" />
<rect x="1138" y="517" width="1" height="4" fill="#909090" />
<rect x="1140" y="519" width="13" height="2" fill="#e4e4e4" />
<rect x="1155" y="517" width="16" height="4" fill="#ffffff" />
<rect x="1155" y="517" width="16" height="1" fill="#909090" />
<rect x="1155" y="517" width="1" height="4" fill="#909090" />
<rect x="1157" y="519" width="13" height="2" fill="#e4e4e4" />
<rect x="1173" y="517" width="16" height="4" fill="#ffffff" />
<rect x="1173" y="517" width="16" height="1" fill="#909090" />
<rect x="1173" y="517" width="1" height="4" fill="#909090" />
<rect x="1175" y="519" width="13" height="2" fill="#e4e4e4" />
<rect x="1190" y="517" width="16" height="4" fill="#ffffff" />
<rect x="1190" y="517" width="16" height="1" fill="#909090" />
<rect x="1190" y="517" width="1" height="4" fill="#909090" />
<rect x="1192" y="519" width="13" height="2" fill="#e4e4e4" />
<rect x="1207" y="517" width="16" height="4" fill="#ffffff" />
<rect x="1207" y="517" width="16" height="1" fill="#909090" />
<rect x="1207" y="517" width="1" height="4" fill="#909090" />
<rect x="1209" y="519" width="13" height="2" fill="#e4e4e4" />
<rect x="1224" y="517" width="16" height="4" fill="#ffffff" />
<rect x="1224" y="517" width="16" height="1" fill="#909090" />
<rect x="1224" y="517" width="1" height="4" fill="#909090" />
<rect x="1226" y="519" width="13" height="2" fill="#e4e4e4" />
<rect x="1242" y="517" width="16" height="4" fill="#ffffff" />
<rect x="1242" y="517" width="16" height="1" fill="#909090" />
<rect x="1242" y="517" width="1" height="4" fill="#909090" />
<rect x="1244" y="519" width="13" height="2" fill="#e4e4e4" />
<rect x="1259" y="517" width="16" height="4" fill="#ffffff" />
<rect x="1259" y="517" width="16" height="1" fill="#909090" />
<rect x="1259" y="517" width="1" height="4" fill="#909090" />
<rect x="1261" y="519" width="13" height="2" fill="#e4e4e4" />
<rect x="1276" y="517" width="16" height="4" fill="#ffffff" />
<rect x="1276" y="517" width="16" height="1" fill="#909090" />
<rect x="1276" y="517" width="1" height="4" fill="#909090" />
<rect x="1278" y="519" width="13" height="2" fill="#e4e4e4" />
<rect x="1293" y="517" width="16" height="4" fill="#ffffff" />
<rect x="1293" y="517" width="16" height="1" fill="#909090" />
<rect x="1293" y="517" width="1" height="4" fill="#909090" />
<rect x="1295" y="519" width="13" height="2" fill="#e4e4e4" />
<rect x="1311" y="517" width="6" height="4" fill="#ffffff" />
<rect x="1311" y="517" width="6" height="1" fill="#909090" />
<rect x="1311" y="517" width="1" height="4" fill="#909090" />
<rect x="1313" y="519" width="3" height="2" fill="#e4e4e4" />
<rect x="1144" y="520" width="2" height="1" fill="#000" />
<rect x="1179" y="520" width="2" height="1" fill="#000080" />
<rect x="1230" y="520" width="4" height="1" fill="#000" />
<rect x="1248" y="520" width="2" height="1" fill="#000" />
<rect x="1265" y="520" width="4" height="1" fill="#000" />
<rect x="1282" y="520" width="4" height="1" fill="#000" />
</svg></body></html>
